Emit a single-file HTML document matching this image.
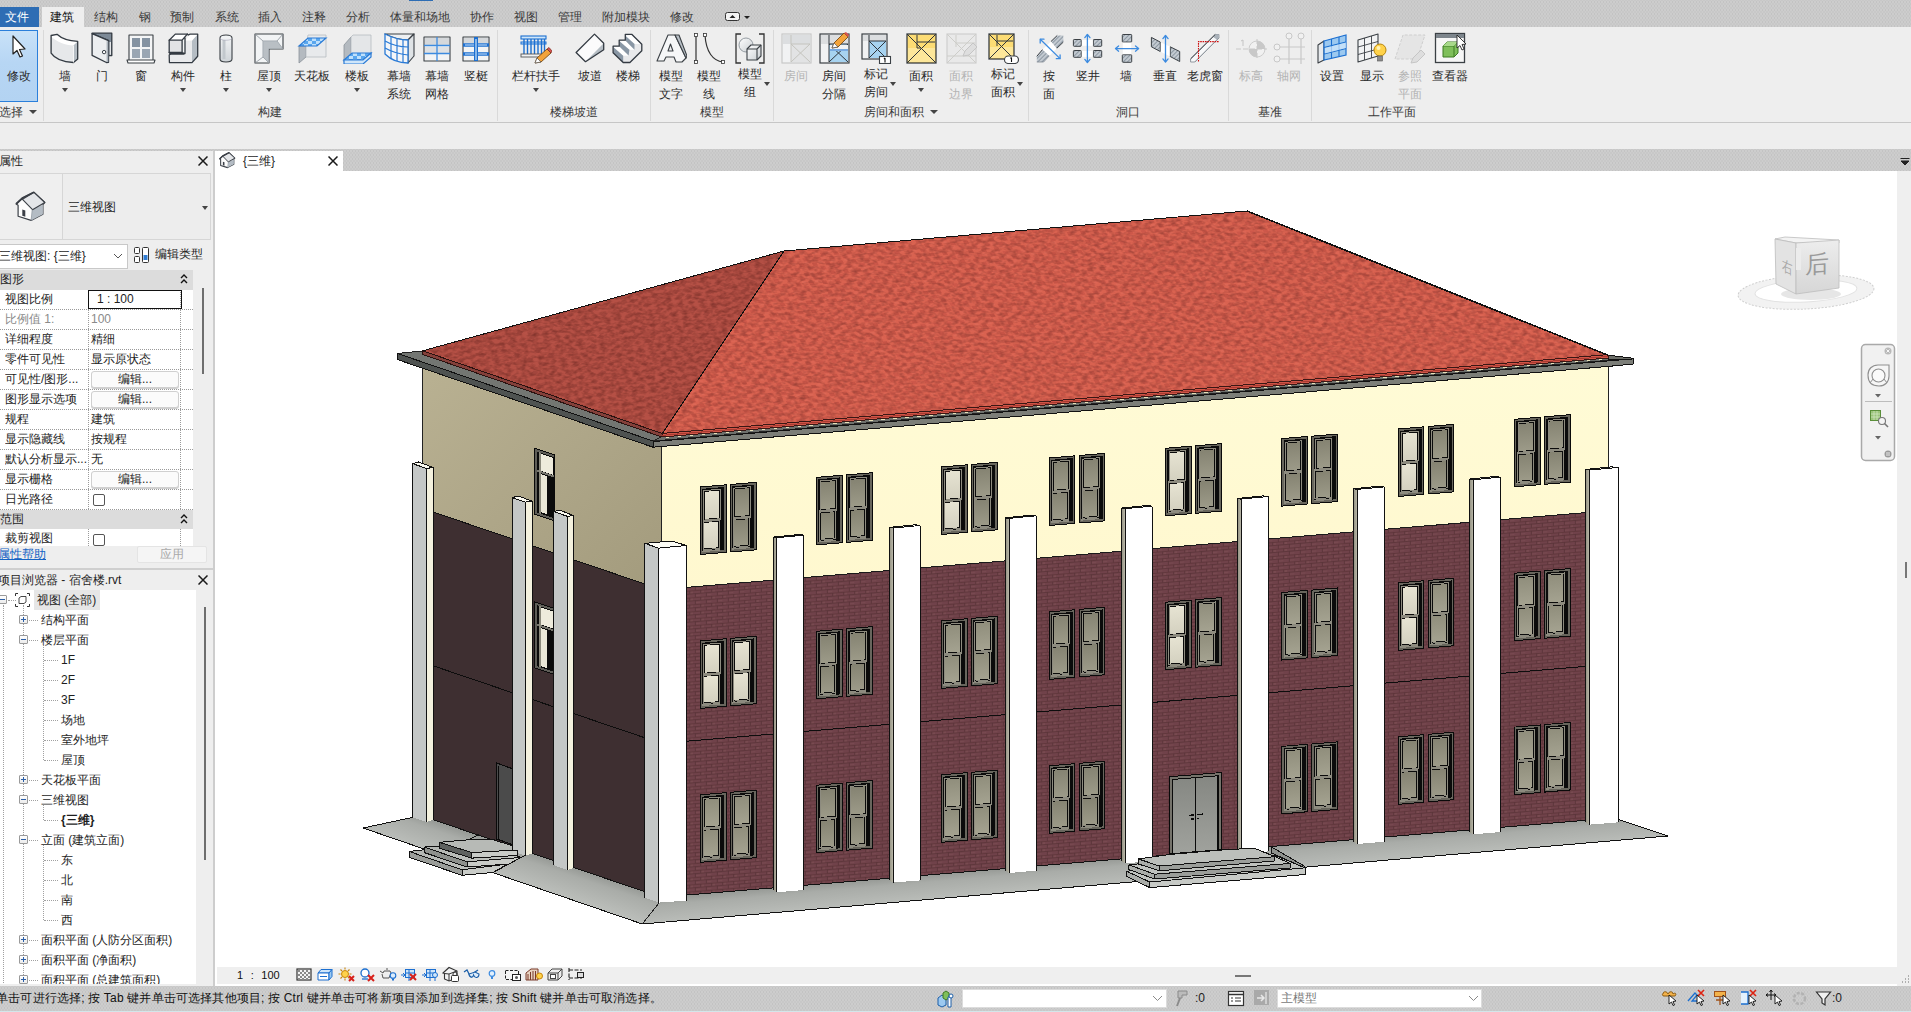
<!DOCTYPE html><html><head><meta charset="utf-8"><title>Revit</title><style>
*{box-sizing:border-box;margin:0;padding:0}
html,body{width:1911px;height:1012px;overflow:hidden;background:#fff;font-family:"Liberation Sans",sans-serif;font-size:12px;color:#1e1e1e}
.abs{position:absolute}
#tabbar{left:0;top:0;width:1911px;height:27px;background-color:#cdcdcd;background-image:radial-gradient(circle,#c3c3c3 0.7px,rgba(195,195,195,0) 0.9px),radial-gradient(circle,#c3c3c3 0.7px,rgba(195,195,195,0) 0.9px);background-size:3px 4px,3px 4px;background-position:0 0,1.5px 2px}
#ribbon{left:0;top:27px;width:1911px;height:96px;background:#eeeeee;border-bottom:1px solid #c6c6c6}
#subrib{left:0;top:123px;width:1911px;height:26px;background:#eeeeee}
#band{left:0;top:149px;width:1911px;height:22px;background-color:#cdcdcd;background-image:radial-gradient(circle,#c3c3c3 0.7px,rgba(195,195,195,0) 0.9px),radial-gradient(circle,#c3c3c3 0.7px,rgba(195,195,195,0) 0.9px);background-size:3px 4px,3px 4px;background-position:0 0,1.5px 2px}
.tab{position:absolute;top:9.4px;height:16px;line-height:16px;font-size:12px;color:#333;white-space:nowrap;transform:translateX(-50%)}
.rl{position:absolute;font-size:12px;line-height:17px;color:#2a2a2a;text-align:center;white-space:nowrap;transform:translateX(-50%)}
.rl.dis{color:#b4b4b4}
.gl{position:absolute;top:104px;font-size:12px;line-height:16px;color:#3a3a3a;white-space:nowrap;transform:translateX(-50%)}
.sep{position:absolute;top:30px;width:1px;height:91px;background:#d9d9d9}
.arr{position:absolute;width:0;height:0;border-left:3px solid transparent;border-right:3px solid transparent;border-top:4px solid #444;transform:translateX(-50%)}
#left{left:0;top:151px;width:213px;height:835px;background:#eeeeee}
#ldiv{left:213px;top:151px;width:2px;height:835px;background:#cdcdcd}
#view{left:215px;top:171px;width:1682px;height:815px;background:#fff}
#vtab{left:215px;top:151px;width:128px;height:20px;background:#fff}
#rscroll{left:1897px;top:171px;width:14px;height:815px;background:#efefef}
#vbar{left:217px;top:967px;width:1694px;height:17px;background:#efefef}
#status{left:0;top:986px;width:1911px;height:26px;background-color:#cdcdcd;background-image:radial-gradient(circle,#c3c3c3 0.7px,rgba(195,195,195,0) 0.9px),radial-gradient(circle,#c3c3c3 0.7px,rgba(195,195,195,0) 0.9px);background-size:3px 4px,3px 4px;background-position:0 0,1.5px 2px;border-bottom:1px solid #d3e6ea}
.prow{position:absolute;left:0;width:193px;height:20px;border-bottom:1px dotted #9a9a9a;background:#fff}
.prow .k{position:absolute;left:5px;top:0;line-height:19px;width:84px;white-space:nowrap;overflow:hidden;font-size:12px}
.prow .v{position:absolute;left:88px;top:0;width:93px;height:19px;border-left:1px dotted #9a9a9a;border-right:1px dotted #9a9a9a;line-height:19px;padding-left:2px;font-size:12px;white-space:nowrap}
.pbtn{position:absolute;left:2px;top:1px;width:88px;height:17px;border:1px solid #d0d0d0;border-radius:3px;background:#fbfbfb;text-align:center;line-height:15px;font-size:12px;box-shadow:0 1px 0 #cfcfcf}
.phead{position:absolute;left:0;width:194px;height:18px;background:#dcdcdc;line-height:17px;font-size:12px}
.tr{position:absolute;height:20px;line-height:20px;font-size:12px;white-space:nowrap;color:#1e1e1e}
.dotl{position:absolute;border-top:1px dotted #a0a0a0;height:0}
.dotv{position:absolute;border-left:1px dotted #a0a0a0;width:0}
.pm{position:absolute;width:9px;height:9px;border:1px solid #9a9a9a;border-radius:1px;background:linear-gradient(#fff,#ececec)}
.pm:before{content:"";position:absolute;left:1px;top:3px;width:5px;height:1px;background:#2b5fa8}
.pm.plus:after{content:"";position:absolute;left:3px;top:1px;width:1px;height:5px;background:#2b5fa8}
.x{position:absolute;width:12px;height:12px}
</style></head><body><div id="tabbar" class="abs"></div><div id="ribbon" class="abs"></div><div id="subrib" class="abs"></div><div id="band" class="abs"></div><div id="left" class="abs"></div><div id="ldiv" class="abs"></div><div id="view" class="abs"></div><div id="vtab" class="abs"></div><div id="rscroll" class="abs"></div><div id="vbar" class="abs"></div><div class="abs" style="left:0;top:7px;width:39px;height:20px;background:#2e6db4"></div><div class="abs" style="left:42px;top:7px;width:42px;height:20px;background:#eeeeee"></div><div class="tab" style="left:17px;color:#fff">文件</div><div class="tab" style="left:62px;color:#111">建筑</div><div class="tab" style="left:106px;color:#3a3a3a">结构</div><div class="tab" style="left:145px;color:#3a3a3a">钢</div><div class="tab" style="left:182px;color:#3a3a3a">预制</div><div class="tab" style="left:227px;color:#3a3a3a">系统</div><div class="tab" style="left:270px;color:#3a3a3a">插入</div><div class="tab" style="left:314px;color:#3a3a3a">注释</div><div class="tab" style="left:358px;color:#3a3a3a">分析</div><div class="tab" style="left:420px;color:#3a3a3a">体量和场地</div><div class="tab" style="left:482px;color:#3a3a3a">协作</div><div class="tab" style="left:526px;color:#3a3a3a">视图</div><div class="tab" style="left:570px;color:#3a3a3a">管理</div><div class="tab" style="left:626px;color:#3a3a3a">附加模块</div><div class="tab" style="left:682px;color:#3a3a3a">修改</div><svg class="abs" style="left:725px;top:12px" width="26" height="10" viewBox="0 0 26 10"><rect x="0.5" y="0.5" width="14" height="8" rx="2" fill="#f4f4f4" stroke="#333"/><path d="M4.5 6L7.5 3L10.5 6Z" fill="#222"/><path d="M19 4L25 4L22 7Z" fill="#222"/></svg><div class="abs" style="left:409px;top:0;width:24px;height:1px;background:#2e6db4"></div><svg width="0" height="0" style="position:absolute"><defs><linearGradient id="gA" x1="0" y1="0" x2="1" y2="1"><stop offset="0" stop-color="#ffffff"/><stop offset="1" stop-color="#c9ced2"/></linearGradient><linearGradient id="gB" x1="0" y1="0" x2="0" y2="1"><stop offset="0" stop-color="#f4f6f7"/><stop offset="1" stop-color="#cfd4d8"/></linearGradient><pattern id="hat" width="3" height="3" patternUnits="userSpaceOnUse" patternTransform="rotate(45)"><rect width="3" height="3" fill="#c3cad1"/><rect width="1" height="3" fill="#8d98a3"/></pattern><pattern id="chk" width="8" height="6" patternUnits="userSpaceOnUse"><rect width="8" height="6" fill="#5aa7ee"/><rect width="4" height="3" fill="#bfe0fb"/><rect x="4" y="3" width="4" height="3" fill="#bfe0fb"/></pattern></defs></svg><div class="abs" style="left:0;top:30px;width:38px;height:72px;background:linear-gradient(#c9e2f8,#b7d6f4 45%,#b3d3f2);border:1px solid #2a7fdb;border-left:none"></div><svg class="abs" style="left:3px;top:32px" width="32" height="32" viewBox="0 0 32 32"><path d="M10 4L10 22L14 18.5L17 25L19.5 24L16.5 17.5L22 17Z" fill="#fff" stroke="#222" stroke-width="1.2" stroke-linejoin="round"/></svg><div class="rl" style="left:19px;top:68px">修改</div><svg class="abs" style="left:49px;top:32px" width="32" height="32" viewBox="0 0 32 32"><path d="M2.1 3.5L8 2.3C13 7 20 9 28.7 9.4L28.7 27L24.5 30.5C15 30 6 27 2.1 21.1Z" fill="#e6e8ea"/><path d="M2.1 3.5L8 2.3C13 7 20 9 28.7 9.4L24.5 13.6C16 13 8 10 2.5 5Z" fill="#ffffff"/><path d="M24.5 13.6L28.7 9.4L28.7 27L24.5 30.5Z" fill="#b5bdc4"/><path d="M2.1 3.5L8 2.3C13 7 20 9 28.7 9.4L28.7 27L24.5 30.5C15 30 6 27 2.1 21.1Z" fill="none" stroke="#333a42" stroke-width="1.3" stroke-linejoin="round" stroke-linecap="round"/><path d="M24.5 13.6L24.5 30.5" fill="none" stroke="#fff" stroke-width=".8"/></svg><div class="rl" style="left:65px;top:68px">墙</div><div class="arr" style="left:65px;top:88px"></div><svg class="abs" style="left:86px;top:32px" width="32" height="32" viewBox="0 0 32 32"><path d="M6.1 1.2L25.8 1.2L25.8 23.6L22.7 23.6L22.7 8.6L6.1 1.7Z" fill="#7d8a97" stroke="#333a42" stroke-width="1.3" stroke-linejoin="round" stroke-linecap="round"/><path d="M23.5 10L25 10L25 22.8L23.5 22.8Z" fill="#e4e6e8"/><path d="M6.1 1.7L22.5 8.6L22.5 30.3L20.4 30.5L6.1 23.4Z" fill="#eceef0" stroke="#333a42" stroke-width="1.3" stroke-linejoin="round" stroke-linecap="round"/><path d="M20.6 9L22.3 9.6L22.3 30L20.6 30Z" fill="#aab3bb"/><circle cx="18.1" cy="20.1" r="1.7" fill="#fff" stroke="#333a42" stroke-width="1"/></svg><div class="rl" style="left:102px;top:68px">门</div><svg class="abs" style="left:125px;top:32px" width="32" height="32" viewBox="0 0 32 32"><rect x="4" y="3" width="24" height="26" fill="#f4f5f6" stroke="#3b4045" stroke-width="1.1" stroke-linejoin="round"/><rect x="7" y="6" width="8" height="9" fill="#8593a2"/><rect x="17" y="6" width="8" height="9" fill="#8593a2"/><rect x="7" y="17" width="8" height="9" fill="#9aa6b3"/><rect x="17" y="17" width="8" height="9" fill="#9aa6b3"/><path d="M2 28L30 28L29 31L3 31Z" fill="#fff" stroke="#3b4045" stroke-width="1.1" stroke-linejoin="round"/></svg><div class="rl" style="left:141px;top:68px">窗</div><svg class="abs" style="left:167px;top:32px" width="32" height="32" viewBox="0 0 32 32"><path d="M2.2 23L18 23L18 8.5L25 8.5L25 30.6L2.4 30.6Z" fill="#e9eaec"/><path d="M25 8.5L30.7 2.5L30.7 24.3L25 30.6Z" fill="#b5bdc4"/><path d="M18 8.5L23.5 2.1L30.7 2.1L25 8.5Z" fill="#fff"/><path d="M2.2 8.2L15.1 8.2L15.1 20.5L2.2 20.5Z" fill="#e2e3e5"/><path d="M2.2 8.2L8.3 2.1L20.3 2.1L15.1 8.2Z" fill="#fff"/><path d="M15.1 8.2L18 5L18 21.5L15.1 20.5Z" fill="#f4f5f6"/><path d="M2.2 8.2L8.3 2.1L20.3 2.1L21.3 3L23.1 2.1L30.7 2.1L30.7 24.3L25 30.6L2.4 30.6L2.2 23L3.5 22L2.2 20.5Z" fill="none" stroke="#333a42" stroke-width="1.3" stroke-linejoin="round" stroke-linecap="round"/><path d="M2.2 8.2L15.1 8.2L15.1 20.5L2.2 20.5M15.1 8.2L20.3 2.1M18 6L18 21.5L15.1 20.5M3.5 22L17 22L18 21.5" fill="none" stroke="#333a42" stroke-width="1.3" stroke-linejoin="round" stroke-linecap="round"/></svg><div class="rl" style="left:183px;top:68px">构件</div><div class="arr" style="left:183px;top:88px"></div><svg class="abs" style="left:210px;top:32px" width="32" height="32" viewBox="0 0 32 32"><path d="M10 6C10 2 22 2 22 6L22 27C22 31 10 31 10 27Z" fill="url(#gB)" stroke="#3b4045" stroke-width="1.1" stroke-linejoin="round"/><path d="M14 8L14 27" stroke="#c2c8cd" stroke-width="3"/><path d="M10 6C10 9 22 9 22 6" fill="none" stroke="#aab" stroke-width=".6"/></svg><div class="rl" style="left:226px;top:68px">柱</div><div class="arr" style="left:226px;top:88px"></div><svg class="abs" style="left:253px;top:32px" width="32" height="32" viewBox="0 0 32 32"><path d="M2 2L30 2L30 17L16 17L16 31L2 31Z" fill="#f2f4f5" stroke="#3b4045" stroke-width="1.1" stroke-linejoin="round"/><path d="M2 2L10 9L24 9L30 2M24 9L30 17M10 9L10 25L2 31M10 25L16 31" fill="none" stroke="#8a9299" stroke-width=".8"/><path d="M10 9L24 9L30 17L16 17L16 31L10 25Z" fill="#aab1b8" opacity=".8"/></svg><div class="rl" style="left:269px;top:68px">屋顶</div><div class="arr" style="left:269px;top:88px"></div><svg class="abs" style="left:296px;top:32px" width="32" height="32" viewBox="0 0 32 32"><path d="M3 14L3 31L10 25L10 14Z" fill="#b4bac0" stroke="#8a9299" stroke-width=".8"/><path d="M10 14L10 25L30 25L30 3L12 3Z" fill="#e8eaec" stroke="#b5bbc0" stroke-width=".8"/><path d="M3 14L12 6L30 6L21 14Z" fill="url(#chk)" stroke="#2b7bd6" stroke-width="1.2"/></svg><div class="rl" style="left:312px;top:68px">天花板</div><svg class="abs" style="left:341px;top:32px" width="32" height="32" viewBox="0 0 32 32"><path d="M3 13L3 30L10 24L10 5Z" fill="#b4bac0" stroke="#8a9299" stroke-width=".8"/><path d="M10 5L10 23L30 23L30 3L12 3Z" fill="#e4e6e8" stroke="#b5bbc0" stroke-width=".8"/><path d="M3 28L11 21L30 21L22 28Z" fill="url(#chk)" stroke="#2b7bd6" stroke-width="1.2"/><path d="M3 28L3 32L22 32L30 25L30 21L22 28Z" fill="#cfe6fa" stroke="#2b7bd6" stroke-width="1.2"/></svg><div class="rl" style="left:357px;top:68px">楼板</div><div class="arr" style="left:357px;top:88px"></div><svg class="abs" style="left:383px;top:32px" width="32" height="32" viewBox="0 0 32 32"><path d="M2 2C10 6 16 8 25 8L31 2Z" fill="#eef0f2" stroke="#3b4045" stroke-width="1.1" stroke-linejoin="round"/><path d="M25 8L31 2L31 24L25 31Z" fill="#dfe3e6" stroke="#3b4045" stroke-width="1.1" stroke-linejoin="round"/><path d="M2 2C10 6 16 8 25 8L25 31C16 31 8 28 2 22Z" fill="#f4f6f8" stroke="#2b7bd6" stroke-width="1.3"/><path d="M2 9C9 13 16 15 25 15M2 16C9 20 16 22 25 23M8 5L8 27M14 7L14 29M20 8L20 31" fill="none" stroke="#2b7bd6" stroke-width="1.2"/></svg><div class="rl" style="left:399px;top:68px">幕墙</div><div class="rl" style="left:399px;top:85.5px">系统</div><svg class="abs" style="left:421px;top:32px" width="32" height="32" viewBox="0 0 32 32"><rect x="3" y="5" width="26" height="24" fill="#f3f4f5" stroke="#3b4045" stroke-width="1.1" stroke-linejoin="round"/><rect x="4" y="6" width="24" height="7" fill="#d5d8db"/><rect x="4" y="15" width="24" height="6" fill="#e0e2e4"/><path d="M3 13.5L29 13.5M3 21.5L29 21.5M16 5L16 29" stroke="#3c8be0" stroke-width="1.3" fill="none"/></svg><div class="rl" style="left:437px;top:68px">幕墙</div><div class="rl" style="left:437px;top:85.5px">网格</div><svg class="abs" style="left:460px;top:32px" width="32" height="32" viewBox="0 0 32 32"><rect x="3" y="5" width="26" height="24" fill="#f3f4f5" stroke="#3b4045" stroke-width="1.1" stroke-linejoin="round"/><rect x="4" y="6" width="24" height="5" fill="#d5d8db"/><path d="M3 13L29 13M3 22L29 22" stroke="#1c6fd0" stroke-width="3.6" fill="none"/><path d="M5 13L27 13M5 22L27 22" stroke="#cfe6fa" stroke-width="1.2" fill="none"/><path d="M16 5L16 29" stroke="#1c6fd0" stroke-width="4" fill="none"/><path d="M16 7L16 28" stroke="#cfe6fa" stroke-width="1.2" fill="none"/></svg><div class="rl" style="left:476px;top:68px">竖梃</div><svg class="abs" style="left:520px;top:32px" width="32" height="32" viewBox="0 0 32 32"><rect x="1" y="4" width="25" height="3" fill="#cfe6fa" stroke="#1c6fd0" stroke-width="1.1"/><rect x="1" y="10" width="25" height="2" fill="#cfe6fa" stroke="#1c6fd0" stroke-width="1"/><path d="M4 7L4 22M7.5 7L7.5 22M11 7L11 22M14.5 7L14.5 22M18 7L18 22M21.5 7L21.5 22M24.5 7L24.5 20" stroke="#1c6fd0" stroke-width="1.4"/><rect x="1" y="22" width="22" height="3" fill="#f2f3f4" stroke="#555" stroke-width=".9"/><path d="M15 31L17 26L27 17L31 21L21 30Z" fill="#f3a33a" stroke="#7a4a10" stroke-width=".9"/><path d="M27 17L29 15.5L32 19L31 21Z" fill="#d9534f" stroke="#7a2a20" stroke-width=".7"/><path d="M15 31L17 26L21 30Z" fill="#fff" stroke="#555" stroke-width=".7"/></svg><div class="rl" style="left:536px;top:68px">栏杆扶手</div><div class="arr" style="left:536px;top:88px"></div><svg class="abs" style="left:574px;top:32px" width="32" height="32" viewBox="0 0 32 32"><path d="M2.1 20.5L20.5 2.1L29.7 11.3L11.5 29.7Z" fill="#fbfbfc"/><path d="M11.5 29.7L29.7 11.3L29.7 17.8Z" fill="#b5bdc4"/><path d="M2.1 20.5L20.5 2.1L29.7 11.3L29.7 17.8L11.5 29.7Z" fill="none" stroke="#333a42" stroke-width="1.3" stroke-linejoin="round" stroke-linecap="round"/></svg><div class="rl" style="left:590px;top:68px">坡道</div><svg class="abs" style="left:612px;top:32px" width="32" height="32" viewBox="0 0 32 32"><path d="M11.2 30.5L11.2 23.8L16.6 23.6L17.4 17.8L22.5 17.8L22.5 12.1L28.7 11.9L29.8 12.3L29.8 18.8L17.9 30.5Z" fill="#e8e9eb"/><path d="M13.7 4L19.5 2.7L28.7 11.9L22.5 12.1Z" fill="#fff"/><path d="M7.8 9.4L13.3 8.6L22.5 17.8L17.4 17.8Z" fill="#fff"/><path d="M1.5 15.3L7.4 14.4L16.6 23.6L11.2 23.8Z" fill="#fff"/><path d="M13.3 8.6L13.7 4L22.5 12.1L22.5 17.8Z" fill="#8997a5"/><path d="M7.4 14.4L7.8 9.4L17.4 17.8L16.6 23.6Z" fill="#8997a5"/><path d="M1.1 20.7L1.5 15.3L11.2 23.8L11.2 30.5Z" fill="#8997a5"/><path d="M1.1 14.2L7.2 14.2L7.2 8.1L13.3 8.1L13.3 2.3L19.7 2.3L29.8 12.3L29.8 18.8L17.9 30.5L11.2 30.5L1.1 20.7Z" fill="none" stroke="#333a42" stroke-width="1.3" stroke-linejoin="round" stroke-linecap="round"/></svg><div class="rl" style="left:628px;top:68px">楼梯</div><svg class="abs" style="left:655px;top:32px" width="32" height="32" viewBox="0 0 32 32"><path d="M2 29L13 3L20 3L31 26L27 30L21 30L19 25L11 25L9 29Z" fill="#f6f7f8" stroke="#3b4045" stroke-width="1.1" stroke-linejoin="round"/><path d="M20 3L24 3L32 24L31 26Z" fill="#b8bfc6" stroke="#3b4045" stroke-width="1.1" stroke-linejoin="round"/><path d="M13 19L18 19L15.5 12Z" fill="#e8eaec" stroke="#3b4045" stroke-width="1.1" stroke-linejoin="round"/></svg><div class="rl" style="left:671px;top:68px">模型</div><div class="rl" style="left:671px;top:85.5px">文字</div><svg class="abs" style="left:693px;top:32px" width="32" height="32" viewBox="0 0 32 32"><path d="M3 3L3 30" stroke="#333" stroke-width="1.2"/><path d="M12 3C13 20 20 29 30 30" stroke="#333" stroke-width="1.2" fill="none"/><rect x="1.5" y="1.5" width="3" height="3" fill="#fff" stroke="#333" stroke-width=".8"/><rect x="1.5" y="28.5" width="3" height="3" fill="#fff" stroke="#333" stroke-width=".8"/><rect x="10.5" y="1.5" width="3" height="3" fill="#fff" stroke="#333" stroke-width=".8"/><rect x="28.5" y="28.5" width="3" height="3" fill="#fff" stroke="#333" stroke-width=".8"/></svg><div class="rl" style="left:709px;top:68px">模型</div><div class="rl" style="left:709px;top:85.5px">线</div><svg class="abs" style="left:734px;top:32px" width="32" height="32" viewBox="0 0 32 32"><path d="M7 2L2 2L2 31L7 31M25 2L30 2L30 31L25 31" fill="none" stroke="#333" stroke-width="1.3"/><circle cx="12" cy="13" r="7" fill="url(#gA)" stroke="#8a9299" stroke-width=".9"/><path d="M13 17L17 13L27 13L27 24L23 28L13 28Z" fill="url(#gA)" stroke="#3b4045" stroke-width="1.1" stroke-linejoin="round"/><path d="M13 17L23 17L23 28M23 17L27 13" fill="none" stroke="#3b4045" stroke-width="1.1" stroke-linejoin="round"/></svg><div class="rl" style="left:750px;top:66px">模型</div><div class="rl" style="left:750px;top:83.5px">组</div><div class="arr" style="left:767px;top:82px"></div><svg class="abs" style="left:780px;top:32px" width="32" height="32" viewBox="0 0 32 32"><rect x="2" y="2" width="29" height="29" fill="#f1f2f3" stroke="#c9c9c9" stroke-width="1.2"/><rect x="3" y="3" width="27" height="9" fill="#dcdee0"/><rect x="11" y="12" width="19" height="18" fill="#e2e3e4"/><path d="M11 3L11 30M11 12L30 12M11 12L30 30M30 12L11 30" stroke="#c4c4be" stroke-width="1" fill="none"/></svg><div class="rl dis" style="left:796px;top:68px">房间</div><svg class="abs" style="left:818px;top:32px" width="32" height="32" viewBox="0 0 32 32"><rect x="2" y="2" width="29" height="29" fill="#f1f2f3" stroke="#3b4045" stroke-width="1.2"/><rect x="3" y="3" width="27" height="9" fill="#dcdee0"/><rect x="11" y="12" width="19" height="18" fill="#a7d3f0"/><path d="M11 3L11 30M11 12L30 12M11 12L30 30M30 12L11 30" stroke="#30363c" stroke-width="1" fill="none"/><rect x="12" y="13" width="18" height="6" fill="#f1f2f3"/><path d="M12 18L30 18" stroke="#2b7bd6" stroke-width="1.2"/><path d="M14 16L16 11L26 1L30 5L20 15Z" fill="#f3a33a" stroke="#7a4a10" stroke-width=".9"/><path d="M26 1L28 0L31 3L30 5Z" fill="#d9534f"/><path d="M14 16L16 11L20 15Z" fill="#fff" stroke="#555" stroke-width=".7"/></svg><div class="rl" style="left:834px;top:68px">房间</div><div class="rl" style="left:834px;top:85.5px">分隔</div><svg class="abs" style="left:860px;top:32px" width="32" height="32" viewBox="0 0 32 32"><rect x="2" y="2" width="25" height="25" fill="#f1f2f3" stroke="#3b4045" stroke-width="1.2"/><rect x="3" y="3" width="23" height="6" fill="#dcdee0"/><rect x="9" y="9" width="17" height="17" fill="#a7d3f0"/><path d="M9 3L9 26M9 9L26 9M9 9L26 26M26 9L9 26" stroke="#30363c" stroke-width="1" fill="none"/><rect x="19.5" y="24.5" width="11" height="7" fill="#fff" stroke="#3b4045" stroke-width="1.1"/><path d="M25 26L25 30.5M24 27L25 26" stroke="#111" stroke-width="1.1" fill="none"/></svg><div class="rl" style="left:876px;top:66px">标记</div><div class="rl" style="left:876px;top:83.5px">房间</div><div class="arr" style="left:893px;top:82px"></div><svg class="abs" style="left:905px;top:32px" width="32" height="32" viewBox="0 0 32 32"><rect x="2" y="2" width="29" height="29" fill="#fcdc74" stroke="#3b4045" stroke-width="1.3"/><rect x="3" y="16" width="27" height="14" fill="#fde79a"/><path d="M2 2L31 31M31 2L2 31M12 3L12 16M12 10L30 10M12 16L16 16" stroke="#30363c" stroke-width="1" fill="none"/></svg><div class="rl" style="left:921px;top:68px">面积</div><div class="arr" style="left:921px;top:88px"></div><svg class="abs" style="left:945px;top:32px" width="32" height="32" viewBox="0 0 32 32"><rect x="2" y="2" width="29" height="29" fill="#e9e9e9" stroke="#cfcfcf" stroke-width="1.2"/><path d="M2 2L31 31M31 2L2 31M11 3L11 15M11 11L30 11M2 24L31 24" stroke="#cdcdc9" stroke-width="1" fill="none"/><path d="M18 24L20 19L28 11L32 15L24 23Z" fill="#dedede" stroke="#c2c2c2" stroke-width=".9"/></svg><div class="rl dis" style="left:961px;top:68px">面积</div><div class="rl dis" style="left:961px;top:85.5px">边界</div><svg class="abs" style="left:987px;top:32px" width="32" height="32" viewBox="0 0 32 32"><rect x="2" y="2" width="25" height="25" fill="#fcdc74" stroke="#3b4045" stroke-width="1.3"/><rect x="3" y="15" width="23" height="11" fill="#fde79a"/><path d="M2 2L27 27M27 2L2 27M10 3L10 14M10 9L26 9" stroke="#30363c" stroke-width="1" fill="none"/><rect x="17.5" y="24" width="14" height="7.5" rx="3.7" fill="#fff" stroke="#3b4045" stroke-width="1.1"/><path d="M24.5 25.5L24.5 30M23.5 26.5L24.5 25.5" stroke="#111" stroke-width="1.1" fill="none"/></svg><div class="rl" style="left:1003px;top:66px">标记</div><div class="rl" style="left:1003px;top:83.5px">面积</div><div class="arr" style="left:1020px;top:82px"></div><svg class="abs" style="left:1033px;top:32px" width="32" height="32" viewBox="0 0 32 32"><path d="M3.8 24.3L9.6 17.5L16.4 23.7L10.6 30L3.8 30Z" fill="url(#hat)"/><path d="M3.8 24.3L9.6 17.5" stroke="#3b4045" stroke-width="1" fill="none"/><path d="M3.8 30L10.6 30L16.4 23.7" stroke="#7d8791" stroke-width=".8" fill="none"/><path d="M17.9 9.6L24.2 3.5L30.3 3.5L30.3 10.1L23.7 16.4Z" fill="url(#hat)"/><path d="M17.9 9.6L24.2 3.5" stroke="#3b4045" stroke-width="1" fill="none"/><path d="M30.3 10.1L23.7 16.4" stroke="#3b4045" stroke-width="1" fill="none"/><path d="M9.6 17.5L17.9 9.6L23.7 16.4L16.4 23.7Z" fill="#fff"/><path d="M7.5 7.5L26.8 26.4" stroke="#3c8be0" stroke-width="1.3" fill="none" stroke-linecap="round" stroke-linejoin="round"/><path d="M7.2 11L7.2 7.2L11 7.2M23.3 26.7L27.1 26.7L27.1 22.9" stroke="#3c8be0" stroke-width="1.3" fill="none" stroke-linecap="round" stroke-linejoin="round"/></svg><div class="rl" style="left:1049px;top:68px">按</div><div class="rl" style="left:1049px;top:85.5px">面</div><svg class="abs" style="left:1072px;top:32px" width="32" height="32" viewBox="0 0 32 32"><rect x="1.4" y="7.5" width="7.9" height="6.8" fill="url(#hat)" stroke="#3b4045" stroke-width="1" rx=".8"/><rect x="21.3" y="7.5" width="8.4" height="6.8" fill="url(#hat)" stroke="#3b4045" stroke-width="1" rx=".8"/><rect x="1.4" y="18.5" width="7.9" height="6.8" fill="url(#hat)" stroke="#3b4045" stroke-width="1" rx=".8"/><rect x="21.3" y="18.5" width="8.4" height="6.8" fill="url(#hat)" stroke="#3b4045" stroke-width="1" rx=".8"/><rect x="9.8" y="8" width="11" height="5.8" fill="#fff"/><rect x="9.8" y="19" width="11" height="5.8" fill="#fff"/><path d="M15.4 2.8L15.4 30" stroke="#3c8be0" stroke-width="1.3" fill="none" stroke-linecap="round" stroke-linejoin="round"/><path d="M12.8 5.6L15.4 2.5L18 5.6M12.8 27.4L15.4 30.5L18 27.4" stroke="#3c8be0" stroke-width="1.3" fill="none" stroke-linecap="round" stroke-linejoin="round"/></svg><div class="rl" style="left:1088px;top:68px">竖井</div><svg class="abs" style="left:1110px;top:32px" width="32" height="32" viewBox="0 0 32 32"><rect x="12.3" y="2.5" width="9.4" height="7.6" fill="url(#hat)" stroke="#3b4045" stroke-width="1" rx=".8"/><rect x="12.3" y="22.7" width="9.4" height="7.6" fill="url(#hat)" stroke="#3b4045" stroke-width="1" rx=".8"/><rect x="12.8" y="10.6" width="8.4" height="11.6" fill="#fff"/><path d="M5.8 16.6L28.3 16.6" stroke="#3c8be0" stroke-width="1.3" fill="none" stroke-linecap="round" stroke-linejoin="round"/><path d="M8.6 14L5.5 16.6L8.6 19.2M25.5 14L28.6 16.6L25.5 19.2" stroke="#3c8be0" stroke-width="1.3" fill="none" stroke-linecap="round" stroke-linejoin="round"/></svg><div class="rl" style="left:1126px;top:68px">墙</div><svg class="abs" style="left:1149px;top:32px" width="32" height="32" viewBox="0 0 32 32"><path d="M2.4 5.4L11.3 10.1L11.3 19.5L2.4 14.8Z" fill="url(#hat)" stroke="#3b4045" stroke-width="1"/><path d="M21.2 14.8L30.7 19.5L30.7 29.5L21.2 24.5Z" fill="url(#hat)" stroke="#3b4045" stroke-width="1"/><path d="M11.8 10.4L20.7 14.6L20.7 24.2L11.8 19.7Z" fill="#fff"/><path d="M16.5 3.8L16.5 29.5" stroke="#3c8be0" stroke-width="1.3" fill="none" stroke-linecap="round" stroke-linejoin="round"/><path d="M13.9 6.6L16.5 3.5L19.1 6.6M13.9 26.9L16.5 30L19.1 26.9" stroke="#3c8be0" stroke-width="1.3" fill="none" stroke-linecap="round" stroke-linejoin="round"/></svg><div class="rl" style="left:1165px;top:68px">垂直</div><svg class="abs" style="left:1189px;top:32px" width="32" height="32" viewBox="0 0 32 32"><path d="M1.6 26.9L26.2 2.5L29.9 2.5L29.9 5.9L5.8 30L1.6 30Z" fill="#f7f8f9" stroke="#7a828a" stroke-width=".8"/><path d="M26.2 2.5L29.9 2.5L29.9 5.9L27.8 7.5L24.1 4.9Z" fill="#aab2ba"/><path d="M1.6 26.9L26.2 2.5" stroke="#3b4045" stroke-width="1"/><path d="M5.8 30L29.9 5.9" stroke="#8a9299" stroke-width=".8"/><path d="M9.5 29.5L9.5 9.6L29.9 9.6" stroke="#cc1010" stroke-width="1.1" stroke-dasharray="1.6 0.8" fill="none"/></svg><div class="rl" style="left:1205px;top:68px">老虎窗</div><svg class="abs" style="left:1235px;top:32px" width="32" height="32" viewBox="0 0 32 32"><circle cx="22" cy="17" r="8" fill="#f1f1f1" stroke="#cdcdcd" stroke-width="1"/><path d="M22 9A8 8 0 0 1 30 17L22 17ZM22 17L22 25A8 8 0 0 1 14 17Z" fill="#c8c8c8"/><path d="M1 17L32 17M22 7L22 27" stroke="#c8c8c8" stroke-width="1" stroke-dasharray="5 2"/><path d="M6 9L8 8L8 14" stroke="#c4c4c4" stroke-width="1" fill="none"/></svg><div class="rl dis" style="left:1251px;top:68px">标高</div><svg class="abs" style="left:1273px;top:32px" width="32" height="32" viewBox="0 0 32 32"><path d="M7 15L32 15M7 27L32 27M16 7L16 32M28 7L28 32" stroke="#c8c8c8" stroke-width="1.2"/><circle cx="16" cy="4" r="3" fill="#f1f1f1" stroke="#c8c8c8"/><circle cx="28" cy="4" r="3" fill="#f1f1f1" stroke="#c8c8c8"/><circle cx="4" cy="15" r="3" fill="#f1f1f1" stroke="#c8c8c8"/><circle cx="4" cy="27" r="3" fill="#f1f1f1" stroke="#c8c8c8"/></svg><div class="rl dis" style="left:1289px;top:68px">轴网</div><svg class="abs" style="left:1316px;top:32px" width="32" height="32" viewBox="0 0 32 32"><path d="M2 13L8 9L8 28L2 31Z" fill="#e6e9ec" stroke="#3b4045" stroke-width="1.1" stroke-linejoin="round"/><path d="M8 9L30 3L30 23L8 28Z" fill="#9cc9f0" stroke="#1c6fd0" stroke-width="1.2"/><path d="M8 15.5L30 10M8 22L30 16.5M15.5 7L15.5 26.5M23 5L23 24.5" stroke="#1c6fd0" stroke-width="1.1" fill="none"/><path d="M9 16L30 10.5L30 16L9 21.5Z" fill="#d6eafb" opacity=".7"/></svg><div class="rl" style="left:1332px;top:68px">设置</div><svg class="abs" style="left:1356px;top:32px" width="32" height="32" viewBox="0 0 32 32"><path d="M2 8L22 2L22 24L2 30Z" fill="#f2f3f4" stroke="#3b4045" stroke-width="1.1" stroke-linejoin="round"/><path d="M2 15L22 9.5M2 22.5L22 17M8.5 6L8.5 28M15.5 4L15.5 26" stroke="#3b4045" stroke-width=".9" fill="none"/><circle cx="24" cy="18" r="6" fill="#ffd24a" stroke="#b8860b" stroke-width="1"/><circle cx="22.5" cy="16" r="2" fill="#fff3b8"/><rect x="21.5" y="24" width="5" height="5" fill="#8c8c8c" stroke="#555" stroke-width=".6"/></svg><div class="rl" style="left:1372px;top:68px">显示</div><svg class="abs" style="left:1394px;top:32px" width="32" height="32" viewBox="0 0 32 32"><path d="M1 27L9 3L31 3L23 27Z" fill="#e5e5e5" stroke="#cfcfcf" stroke-width="1" stroke-dasharray="3 1.5"/><path d="M17 31L19 26L27 18L31 22L23 30Z" fill="#dedede" stroke="#c2c2c2" stroke-width=".9"/></svg><div class="rl dis" style="left:1410px;top:68px">参照</div><div class="rl dis" style="left:1410px;top:85.5px">平面</div><svg class="abs" style="left:1434px;top:32px" width="32" height="32" viewBox="0 0 32 32"><rect x="1.5" y="1.5" width="29" height="29" fill="#f6f6f6" stroke="#3b4045" stroke-width="1.3"/><rect x="2" y="2" width="28" height="4" fill="#7d858c"/><path d="M9 14L13 10L24 10L24 21L20 25L9 25Z" fill="#7fbf5a" stroke="#3d7a22" stroke-width="1"/><path d="M9 14L20 14L20 25M20 14L24 10" stroke="#3d7a22" stroke-width="1" fill="none"/><path d="M9 14L13 10L24 10L20 14Z" fill="#a8d98a"/><path d="M23 3L23 16L26 13.5L28 18L30 17L28 12.5L32 12Z" fill="#fff" stroke="#222" stroke-width=".9" stroke-linejoin="round"/></svg><div class="rl" style="left:1450px;top:68px">查看器</div><div class="sep" style="left:43px"></div><div class="sep" style="left:497px"></div><div class="sep" style="left:650px"></div><div class="sep" style="left:773px"></div><div class="sep" style="left:1028px"></div><div class="sep" style="left:1228px"></div><div class="sep" style="left:1311px"></div><div class="gl" style="left:270px">构建</div><div class="gl" style="left:574px">楼梯坡道</div><div class="gl" style="left:712px">模型</div><div class="gl" style="left:1128px">洞口</div><div class="gl" style="left:1270px">基准</div><div class="gl" style="left:1392px">工作平面</div><div class="gl" style="left:894px">房间和面积</div><div class="arr" style="left:934px;top:110px;border-left-width:4px;border-right-width:4px"></div><div class="gl" style="left:11px">选择</div><div class="arr" style="left:33px;top:110px;border-left-width:4px;border-right-width:4px"></div><div class="abs" style="left:-1px;top:153px;line-height:16px;font-size:12px">属性</div><svg class="abs" style="left:198px;top:156px" width="10" height="10" viewBox="0 0 10 10"><path d="M0.5 0.5L9.5 9.5M9.5 0.5L0.5 9.5" stroke="#1a1a1a" stroke-width="1.5" fill="none"/></svg><div class="abs" style="left:-1px;top:173px;width:212px;height:67px;border:1px solid #d6d6d6;background:#ededed"></div><div class="abs" style="left:-1px;top:173px;width:64px;height:67px;border:1px solid #d6d6d6;background:#efefef"></div><svg class="abs" style="left:15px;top:191px" width="32" height="32" viewBox="0 0 32 32"><path d="M1.1 13L7.5 7L18.9 1.2L29.8 11.5L27.9 13.5L27.9 23.2L16.1 29.4L3.1 25.3L3.1 14.2Z" fill="#fdfdfd" stroke="#3a3f46" stroke-width="1.2" stroke-linejoin="round"/><path d="M17.2 18.7L27.9 13.5L27.9 23.2L16.1 29.4Z" fill="#b4bcc4"/><path d="M7.5 8.3L18.9 1.4L29.8 11.5L17.5 18.7Z" fill="#e4e6e9" stroke="#3a3f46" stroke-width="1.1" stroke-linejoin="round"/><path d="M1.1 13L7.5 7L18.9 1.2" fill="none" stroke="#3a3f46" stroke-width="1.8"/><path d="M7.3 18.4L10.3 19.4L10.3 25.8L7.3 24.8Z" fill="#3c4048"/><path d="M17.2 18.7L16.1 29.4" stroke="#8b949c" stroke-width=".7"/></svg><div class="abs" style="left:68px;top:199px;line-height:16px;font-size:12px">三维视图</div><div class="arr" style="left:205px;top:206px"></div><div class="abs" style="left:-1px;top:244px;width:129px;height:25px;background:#fff;border:1px solid #c8c8c8"></div><div class="abs" style="left:-1px;top:248px;line-height:16px;font-size:12px">三维视图: {三维}</div><svg class="abs" style="left:113px;top:253px" width="10" height="7" viewBox="0 0 10 7"><path d="M1 1L5 5L9 1" fill="none" stroke="#555" stroke-width="1"/></svg><svg class="abs" style="left:133px;top:246px" width="17" height="18" viewBox="0 0 17 18"><rect x="1.5" y="1.5" width="5" height="6" rx="1" fill="#fff" stroke="#333"/><rect x="1.5" y="10.5" width="5" height="6" rx="1" fill="#fff" stroke="#333"/><rect x="9.5" y="1.5" width="6" height="15" rx="1" fill="#fff" stroke="#333"/><rect x="10.5" y="9" width="4" height="5" fill="#2f7bd1"/></svg><div class="abs" style="left:155px;top:246px;line-height:16px;font-size:12px">编辑类型</div><div class="abs" style="left:0;top:270px;width:194px;height:276px;background:#fff"></div><div class="phead" style="top:270px;height:20px;line-height:19px">图形</div><svg class="abs" style="left:180px;top:274px" width="8" height="10" viewBox="0 0 8 10"><path d="M1 4L4 1L7 4M1 9L4 6L7 9" fill="none" stroke="#111" stroke-width="1.4"/></svg><div class="prow" style="top:290px"><div class="k">视图比例</div><div class="v"><div style="position:absolute;left:-1px;top:0px;width:94px;height:19px;border:1.5px solid #111;padding-left:8px;line-height:16px">1 : 100</div></div></div><div class="prow" style="top:310px"><div class="k" style="color:#8a8a8a">比例值 1:</div><div class="v"><span style="color:#8a8a8a">100</span></div></div><div class="prow" style="top:330px"><div class="k">详细程度</div><div class="v">精细</div></div><div class="prow" style="top:350px"><div class="k">零件可见性</div><div class="v">显示原状态</div></div><div class="prow" style="top:370px"><div class="k">可见性/图形...</div><div class="v"><div class="pbtn">编辑...</div></div></div><div class="prow" style="top:390px"><div class="k">图形显示选项</div><div class="v"><div class="pbtn">编辑...</div></div></div><div class="prow" style="top:410px"><div class="k">规程</div><div class="v">建筑</div></div><div class="prow" style="top:430px"><div class="k">显示隐藏线</div><div class="v">按规程</div></div><div class="prow" style="top:450px"><div class="k">默认分析显示...</div><div class="v">无</div></div><div class="prow" style="top:470px"><div class="k">显示栅格</div><div class="v"><div class="pbtn">编辑...</div></div></div><div class="prow" style="top:490px"><div class="k">日光路径</div><div class="v"><div style="position:absolute;left:4px;top:4px;width:12px;height:12px;border:1px solid #555;border-radius:2px;background:#fff"></div></div></div><div class="phead" style="top:510px;height:19px;line-height:19px">范围</div><svg class="abs" style="left:180px;top:514px" width="8" height="10" viewBox="0 0 8 10"><path d="M1 4L4 1L7 4M1 9L4 6L7 9" fill="none" stroke="#111" stroke-width="1.4"/></svg><div class="abs" style="left:0;top:529px;width:193px;height:17px;overflow:hidden"><div class="prow" style="top:0"><div class="k">裁剪视图</div><div class="v"><div style="position:absolute;left:4px;top:5px;width:12px;height:12px;border:1px solid #555;border-radius:2px;background:#fff"></div></div></div></div><div class="abs" style="left:193px;top:270px;width:20px;height:276px;background:#eeeeee"></div><div class="abs" style="left:202px;top:288px;width:2px;height:86px;background:#6e6e6e"></div><div class="abs" style="left:-2px;top:546px;line-height:17px;font-size:12px;color:#1463c4;text-decoration:underline">属性帮助</div><div class="abs" style="left:137px;top:546px;width:70px;height:17px;background:#f5f5f5;border:1px solid #e4e4e4;border-radius:2px;color:#a9a9a9;text-align:center;line-height:15px;font-size:12px">应用</div><div class="abs" style="left:0;top:568px;width:213px;height:1.5px;background:#cfcfcf"></div><div class="abs" style="left:-2px;top:572px;line-height:16px;font-size:12px">项目浏览器 - 宿舍楼.rvt</div><svg class="abs" style="left:198px;top:575px" width="10" height="10" viewBox="0 0 10 10"><path d="M0.5 0.5L9.5 9.5M9.5 0.5L0.5 9.5" stroke="#1a1a1a" stroke-width="1.5" fill="none"/></svg><div class="abs" style="left:0;top:590px;width:196px;height:394px;background:#fff"></div><div class="abs" style="left:204px;top:607px;width:2px;height:253px;background:#6e6e6e"></div><div class="abs" style="left:34px;top:590px;width:66px;height:20px;background:#e6e6e6"></div><div class="dotv" style="left:3px;top:605px;height:382px"></div><div class="dotv" style="left:23px;top:605px;height:382px"></div><div class="dotv" style="left:43px;top:645px;height:115px"></div><div class="dotv" style="left:43px;top:805px;height:15px"></div><div class="dotv" style="left:43px;top:845px;height:75px"></div><div class="pm" style="left:-2px;top:595px"></div><div class="dotl" style="left:8px;top:600px;width:8px"></div><svg class="abs" style="left:15px;top:593px" width="15" height="14" viewBox="0 0 15 14"><path d="M3 0.5L0.5 0.5L0.5 3M12 0.5L14.5 0.5L14.5 3M3 13.5L0.5 13.5L0.5 11M12 13.5L14.5 13.5L14.5 11" fill="none" stroke="#333"/><path d="M4 5L6 3.5L11 3.5L11 9L9 10.5L4 10.5Z" fill="#fff" stroke="#333" stroke-width=".9"/></svg><div class="tr" style="left:37px;top:590px">视图 (全部)</div><div class="pm plus" style="left:19px;top:615px"></div><div class="dotl" style="left:29px;top:620px;width:9px"></div><div class="tr" style="left:41px;top:610px">结构平面</div><div class="pm" style="left:19px;top:635px"></div><div class="dotl" style="left:29px;top:640px;width:9px"></div><div class="tr" style="left:41px;top:630px">楼层平面</div><div class="dotl" style="left:44px;top:660px;width:14px"></div><div class="tr" style="left:61px;top:650px">1F</div><div class="dotl" style="left:44px;top:680px;width:14px"></div><div class="tr" style="left:61px;top:670px">2F</div><div class="dotl" style="left:44px;top:700px;width:14px"></div><div class="tr" style="left:61px;top:690px">3F</div><div class="dotl" style="left:44px;top:720px;width:14px"></div><div class="tr" style="left:61px;top:710px">场地</div><div class="dotl" style="left:44px;top:740px;width:14px"></div><div class="tr" style="left:61px;top:730px">室外地坪</div><div class="dotl" style="left:44px;top:760px;width:14px"></div><div class="tr" style="left:61px;top:750px">屋顶</div><div class="pm plus" style="left:19px;top:775px"></div><div class="dotl" style="left:29px;top:780px;width:9px"></div><div class="tr" style="left:41px;top:770px">天花板平面</div><div class="pm" style="left:19px;top:795px"></div><div class="dotl" style="left:29px;top:800px;width:9px"></div><div class="tr" style="left:41px;top:790px">三维视图</div><div class="dotl" style="left:44px;top:820px;width:14px"></div><div class="tr" style="left:61px;top:810px;font-weight:bold">{三维}</div><div class="pm" style="left:19px;top:835px"></div><div class="dotl" style="left:29px;top:840px;width:9px"></div><div class="tr" style="left:41px;top:830px">立面 (建筑立面)</div><div class="dotl" style="left:44px;top:860px;width:14px"></div><div class="tr" style="left:61px;top:850px">东</div><div class="dotl" style="left:44px;top:880px;width:14px"></div><div class="tr" style="left:61px;top:870px">北</div><div class="dotl" style="left:44px;top:900px;width:14px"></div><div class="tr" style="left:61px;top:890px">南</div><div class="dotl" style="left:44px;top:920px;width:14px"></div><div class="tr" style="left:61px;top:910px">西</div><div class="pm plus" style="left:19px;top:935px"></div><div class="dotl" style="left:29px;top:940px;width:9px"></div><div class="tr" style="left:41px;top:930px">面积平面 (人防分区面积)</div><div class="pm plus" style="left:19px;top:955px"></div><div class="dotl" style="left:29px;top:960px;width:9px"></div><div class="tr" style="left:41px;top:950px">面积平面 (净面积)</div><div class="pm plus" style="left:19px;top:975px"></div><div class="dotl" style="left:29px;top:980px;width:9px"></div><div class="tr" style="left:41px;top:970px">面积平面 (总建筑面积)</div><div class="abs" style="left:0;top:984px;width:213px;height:2px;background:#eeeeee"></div><div id="status" class="abs"></div><svg class="abs" style="left:219px;top:152px" width="17" height="17" viewBox="0 0 32 32"><path d="M1.1 13L7.5 7L18.9 1.2L29.8 11.5L27.9 13.5L27.9 23.2L16.1 29.4L3.1 25.3L3.1 14.2Z" fill="#fdfdfd" stroke="#3a3f46" stroke-width="2" stroke-linejoin="round"/><path d="M17.2 18.7L27.9 13.5L27.9 23.2L16.1 29.4Z" fill="#b4bcc4"/><path d="M7.5 8.3L18.9 1.4L29.8 11.5L17.5 18.7Z" fill="#e4e6e9" stroke="#3a3f46" stroke-width="1.8" stroke-linejoin="round"/><path d="M1.1 13L7.5 7L18.9 1.2" fill="none" stroke="#3a3f46" stroke-width="2.6"/><path d="M7.3 18.4L10.3 19.4L10.3 25.8L7.3 24.8Z" fill="#3c4048"/><path d="M17.2 18.7L16.1 29.4" stroke="#8b949c" stroke-width=".7"/></svg><div class="abs" style="left:243px;top:153px;line-height:16px;font-size:12px">{三维}</div><svg class="abs" style="left:328px;top:156px" width="10" height="10" viewBox="0 0 10 10"><path d="M0.5 0.5L9.5 9.5M9.5 0.5L0.5 9.5" stroke="#1a1a1a" stroke-width="1.5" fill="none"/></svg><svg class="abs" style="left:1900px;top:158px" width="10" height="8" viewBox="0 0 10 8"><path d="M0.5 0.5L9.5 0.5M1 3L9 3L5 7Z" fill="#222" stroke="#222"/></svg><svg class="abs" style="left:216px;top:171px" width="1681" height="794" viewBox="216 171 1681 794" shape-rendering="crispEdges"><defs><linearGradient id="gTan" x1="0" y1="0" x2="1" y2="1"><stop offset="0" stop-color="#b9b192"/><stop offset="0.5" stop-color="#aea688"/><stop offset="1" stop-color="#a39b7d"/></linearGradient><linearGradient id="gCream" x1="0" y1="0" x2="0" y2="1"><stop offset="0" stop-color="#fffbd6"/><stop offset="1" stop-color="#fff8cf"/></linearGradient><linearGradient id="gSlab" gradientUnits="userSpaceOnUse" x1="1000" y1="868" x2="1002.3" y2="895"><stop offset="0" stop-color="#959894"/><stop offset="0.3" stop-color="#a9aca8"/><stop offset="0.7" stop-color="#b3b6b2"/><stop offset="1" stop-color="#bbbeba"/></linearGradient><linearGradient id="gSlabL" gradientUnits="userSpaceOnUse" x1="506" y1="844" x2="496" y2="874"><stop offset="0" stop-color="#959894"/><stop offset="0.3" stop-color="#a9aca8"/><stop offset="0.7" stop-color="#b3b6b2"/><stop offset="1" stop-color="#bbbeba"/></linearGradient><linearGradient id="gStep" x1="0" y1="0" x2="1" y2="1"><stop offset="0" stop-color="#b0b3af"/><stop offset="1" stop-color="#c2c5c1"/></linearGradient><linearGradient id="gGlassD" x1="0" y1="0" x2="0" y2="1"><stop offset="0" stop-color="#858372"/><stop offset="1" stop-color="#9c9a88"/></linearGradient><linearGradient id="gGlassM" x1="0" y1="0" x2="0" y2="1"><stop offset="0" stop-color="#908e7c"/><stop offset="1" stop-color="#a4a290"/></linearGradient><linearGradient id="gGlassL" x1="0" y1="0" x2="0" y2="1"><stop offset="0" stop-color="#e6e3d2"/><stop offset="1" stop-color="#d4d1c0"/></linearGradient><linearGradient id="gDoor" x1="0" y1="0" x2="0" y2="1"><stop offset="0" stop-color="#858782"/><stop offset="1" stop-color="#a0a29d"/></linearGradient><linearGradient id="gColS" x1="0" y1="0" x2="1" y2="0"><stop offset="0" stop-color="#8f8d7e"/><stop offset="1" stop-color="#b9b7a8"/></linearGradient><pattern id="brick" width="11" height="7" patternUnits="userSpaceOnUse" patternTransform="matrix(1 -0.0832 0 1 0 0)"><rect width="11" height="7" fill="#70424a"/><rect y="0" width="11" height="1" fill="#5f373c"/><rect y="3.5" width="11" height="1" fill="#62383d"/><rect x="2" y="0" width="1" height="3.5" fill="#5a3439"/><rect x="7.5" y="3.5" width="1" height="3.5" fill="#5a3439"/><rect x="3" y="1.5" width="4" height="1.5" fill="#784a50"/><rect x="8.5" y="5" width="2.5" height="1.5" fill="#784a50"/></pattern><pattern id="tileF" width="13" height="9" patternUnits="userSpaceOnUse" patternTransform="matrix(1 -0.0832 0.55 1 0 0)"><rect width="13" height="9" fill="#d96250"/><rect x="1" y="1" width="5" height="3" fill="#c04e43" opacity=".75"/><rect x="7" y="5" width="5" height="3" fill="#c55246" opacity=".6"/><rect x="7" y="0" width="4" height="2" fill="#de6a59" opacity=".7"/><rect x="0" y="5" width="4" height="2" fill="#dd6857" opacity=".6"/></pattern><pattern id="tileS" width="13" height="9" patternUnits="userSpaceOnUse" patternTransform="matrix(1 0.34 -0.9 1 0 0)"><rect width="13" height="9" fill="#b55045"/><rect x="1" y="1" width="5" height="3" fill="#9c4239" opacity=".7"/><rect x="7" y="5" width="5" height="3" fill="#a1453b" opacity=".6"/><rect x="7" y="0" width="4" height="2" fill="#b95448" opacity=".6"/></pattern><filter id="mottF" x="0" y="0" width="1" height="1" color-interpolation-filters="sRGB"><feTurbulence type="fractalNoise" baseFrequency="0.17 0.3" numOctaves="2" seed="7" result="n"/><feColorMatrix in="n" type="matrix" values="0 0 0 0 0.62  0 0 0 0 0.26  0 0 0 0 0.22  1.9 0 0 0 -0.72" result="c"/><feComposite in="c" in2="SourceGraphic" operator="in"/></filter><filter id="mottS" x="0" y="0" width="1" height="1" color-interpolation-filters="sRGB"><feTurbulence type="fractalNoise" baseFrequency="0.18 0.3" numOctaves="2" seed="11" result="n"/><feColorMatrix in="n" type="matrix" values="0 0 0 0 0.5  0 0 0 0 0.2  0 0 0 0 0.17  1.7 0 0 0 -0.65" result="c"/><feComposite in="c" in2="SourceGraphic" operator="in"/></filter></defs><polygon points="642.3,924 659,903 661,894.2 1608.5,815.4 1618.6,819.5 1668,836" fill="url(#gSlab)"/><polygon points="363,828 412.4,817.4 422,812.9 661,894.2 659,903 642.3,924" fill="url(#gSlabL)"/><polygon points="363,828 412.4,817.4 422,815.9 661,897.2 1608.5,818.4 1618.6,819.5 1668,836 642.3,924" fill="none" stroke="#111" stroke-width="1" stroke-linejoin="round"/><line x1="642.3" y1="924" x2="659" y2="903" stroke="#222" stroke-width="1"/><polygon points="422,365 661,444 661,589.5 422,508.2" fill="url(#gTan)" stroke="#222" stroke-width="1" stroke-linejoin="round"/><polygon points="422,508.2 661,589.5 661,897.2 422,815.9" fill="#3e2f31" stroke="#111" stroke-width="1" stroke-linejoin="round"/><line x1="422" y1="662" x2="661" y2="743.3" stroke="#0d0d0d" stroke-width="1"/><polygon points="661,444 1608.5,365.2 1608.5,510.7 661,589.5" fill="url(#gCream)" stroke="#222" stroke-width="1" stroke-linejoin="round"/><polygon points="661,589.5 1608.5,510.7 1608.5,818.4 661,897.2" fill="url(#brick)" stroke="#111" stroke-width="1" stroke-linejoin="round"/><line x1="661" y1="589.5" x2="1608.5" y2="510.7" stroke="#1a1a1a" stroke-width="1"/><line x1="661" y1="743.3" x2="1608.5" y2="664.5" stroke="#0d0d0d" stroke-width="1"/><g transform="matrix(1 0.34 0 1 534.4 448)"><rect x="0" y="0" width="20.5" height="66" fill="#5f5e58" stroke="#0a0a0a" stroke-width="1"/><rect x="3" y="2.5" width="16.5" height="61" fill="#0b0b0b"/><rect x="7" y="3.5" width="12" height="17" fill="#eeebdc"/><rect x="7" y="24" width="6" height="38" fill="#e9e6d6"/><rect x="3" y="21" width="16.5" height="2" fill="#77766e"/><rect x="4.5" y="2.5" width="1.6" height="61" fill="#8b897c"/></g><g transform="matrix(1 0.34 0 1 534.4 601.8)"><rect x="0" y="0" width="20.5" height="66" fill="#5f5e58" stroke="#0a0a0a" stroke-width="1"/><rect x="3" y="2.5" width="16.5" height="61" fill="#0b0b0b"/><rect x="7" y="3.5" width="12" height="17" fill="#eeebdc"/><rect x="7" y="24" width="6" height="38" fill="#e9e6d6"/><rect x="3" y="21" width="16.5" height="2" fill="#77766e"/><rect x="4.5" y="2.5" width="1.6" height="61" fill="#8b897c"/></g><polygon points="496.4,763 512.3,768.6 512.3,844.5 496.4,839" fill="#4b4b4b" stroke="#0a0a0a" stroke-width="1.2" stroke-linejoin="round"/><line x1="498.6" y1="766" x2="498.6" y2="839.5" stroke="#0a0a0a" stroke-width="1.5"/><g transform="matrix(1 -0.0832 0 1 700.3 487)"><rect x="0" y="0" width="25.8" height="67.5" fill="#68665d" stroke="#0a0a0a" stroke-width="1"/><rect x="1.9" y="2" width="22" height="63.1" fill="#0b0b0b"/><rect x="3.6" y="3.9" width="16.4" height="29.5" fill="none" stroke="#8d8b7f" stroke-width="1"/><rect x="3" y="35" width="16.2" height="28" fill="none" stroke="#8d8b7f" stroke-width="1"/><rect x="4.8" y="5.2" width="13.8" height="27" fill="url(#gGlassL)"/><rect x="4.2" y="36.2" width="13.6" height="25.6" fill="url(#gGlassL)"/><rect x="2.6" y="33" width="17.8" height="1.8" fill="#8d8b7f"/><rect x="2" y="63.7" width="17.8" height="1.6" fill="#8d8b7f"/></g><g transform="matrix(1 -0.0832 0 1 730.3 484.5)"><rect x="0" y="0" width="25.8" height="67.5" fill="#68665d" stroke="#0a0a0a" stroke-width="1"/><rect x="1.9" y="2" width="22" height="63.1" fill="#0b0b0b"/><rect x="3.6" y="3.9" width="16.4" height="29.5" fill="none" stroke="#8d8b7f" stroke-width="1"/><rect x="3" y="35" width="16.2" height="28" fill="none" stroke="#8d8b7f" stroke-width="1"/><rect x="4.8" y="5.2" width="13.8" height="27" fill="url(#gGlassD)"/><rect x="4.2" y="36.2" width="13.6" height="25.6" fill="url(#gGlassD)"/><rect x="2.6" y="33" width="17.8" height="1.8" fill="#8d8b7f"/><rect x="2" y="63.7" width="17.8" height="1.6" fill="#8d8b7f"/></g><g transform="matrix(1 -0.0832 0 1 816.6 477.4)"><rect x="0" y="0" width="25.8" height="67.5" fill="#68665d" stroke="#0a0a0a" stroke-width="1"/><rect x="1.9" y="2" width="22" height="63.1" fill="#0b0b0b"/><rect x="3.6" y="3.9" width="16.4" height="29.5" fill="none" stroke="#8d8b7f" stroke-width="1"/><rect x="3" y="35" width="16.2" height="28" fill="none" stroke="#8d8b7f" stroke-width="1"/><rect x="4.8" y="5.2" width="13.8" height="27" fill="url(#gGlassD)"/><rect x="4.2" y="36.2" width="13.6" height="25.6" fill="url(#gGlassD)"/><rect x="2.6" y="33" width="17.8" height="1.8" fill="#8d8b7f"/><rect x="2" y="63.7" width="17.8" height="1.6" fill="#8d8b7f"/></g><g transform="matrix(1 -0.0832 0 1 846.6 474.9)"><rect x="0" y="0" width="25.8" height="67.5" fill="#68665d" stroke="#0a0a0a" stroke-width="1"/><rect x="1.9" y="2" width="22" height="63.1" fill="#0b0b0b"/><rect x="3.6" y="3.9" width="16.4" height="29.5" fill="none" stroke="#8d8b7f" stroke-width="1"/><rect x="3" y="35" width="16.2" height="28" fill="none" stroke="#8d8b7f" stroke-width="1"/><rect x="4.8" y="5.2" width="13.8" height="27" fill="url(#gGlassD)"/><rect x="4.2" y="36.2" width="13.6" height="25.6" fill="url(#gGlassD)"/><rect x="2.6" y="33" width="17.8" height="1.8" fill="#8d8b7f"/><rect x="2" y="63.7" width="17.8" height="1.6" fill="#8d8b7f"/></g><g transform="matrix(1 -0.0832 0 1 941.3 467)"><rect x="0" y="0" width="25.8" height="67.5" fill="#68665d" stroke="#0a0a0a" stroke-width="1"/><rect x="1.9" y="2" width="22" height="63.1" fill="#0b0b0b"/><rect x="3.6" y="3.9" width="16.4" height="29.5" fill="none" stroke="#8d8b7f" stroke-width="1"/><rect x="3" y="35" width="16.2" height="28" fill="none" stroke="#8d8b7f" stroke-width="1"/><rect x="4.8" y="5.2" width="13.8" height="27" fill="url(#gGlassL)"/><rect x="4.2" y="36.2" width="13.6" height="25.6" fill="url(#gGlassL)"/><rect x="2.6" y="33" width="17.8" height="1.8" fill="#8d8b7f"/><rect x="2" y="63.7" width="17.8" height="1.6" fill="#8d8b7f"/></g><g transform="matrix(1 -0.0832 0 1 971.3 464.5)"><rect x="0" y="0" width="25.8" height="67.5" fill="#68665d" stroke="#0a0a0a" stroke-width="1"/><rect x="1.9" y="2" width="22" height="63.1" fill="#0b0b0b"/><rect x="3.6" y="3.9" width="16.4" height="29.5" fill="none" stroke="#8d8b7f" stroke-width="1"/><rect x="3" y="35" width="16.2" height="28" fill="none" stroke="#8d8b7f" stroke-width="1"/><rect x="4.8" y="5.2" width="13.8" height="27" fill="url(#gGlassD)"/><rect x="4.2" y="36.2" width="13.6" height="25.6" fill="url(#gGlassD)"/><rect x="2.6" y="33" width="17.8" height="1.8" fill="#8d8b7f"/><rect x="2" y="63.7" width="17.8" height="1.6" fill="#8d8b7f"/></g><g transform="matrix(1 -0.0832 0 1 1049.1 458)"><rect x="0" y="0" width="25.8" height="67.5" fill="#68665d" stroke="#0a0a0a" stroke-width="1"/><rect x="1.9" y="2" width="22" height="63.1" fill="#0b0b0b"/><rect x="3.6" y="3.9" width="16.4" height="29.5" fill="none" stroke="#8d8b7f" stroke-width="1"/><rect x="3" y="35" width="16.2" height="28" fill="none" stroke="#8d8b7f" stroke-width="1"/><rect x="4.8" y="5.2" width="13.8" height="27" fill="url(#gGlassD)"/><rect x="4.2" y="36.2" width="13.6" height="25.6" fill="url(#gGlassD)"/><rect x="2.6" y="33" width="17.8" height="1.8" fill="#8d8b7f"/><rect x="2" y="63.7" width="17.8" height="1.6" fill="#8d8b7f"/></g><g transform="matrix(1 -0.0832 0 1 1079.1 455.5)"><rect x="0" y="0" width="25.8" height="67.5" fill="#68665d" stroke="#0a0a0a" stroke-width="1"/><rect x="1.9" y="2" width="22" height="63.1" fill="#0b0b0b"/><rect x="3.6" y="3.9" width="16.4" height="29.5" fill="none" stroke="#8d8b7f" stroke-width="1"/><rect x="3" y="35" width="16.2" height="28" fill="none" stroke="#8d8b7f" stroke-width="1"/><rect x="4.8" y="5.2" width="13.8" height="27" fill="url(#gGlassD)"/><rect x="4.2" y="36.2" width="13.6" height="25.6" fill="url(#gGlassD)"/><rect x="2.6" y="33" width="17.8" height="1.8" fill="#8d8b7f"/><rect x="2" y="63.7" width="17.8" height="1.6" fill="#8d8b7f"/></g><g transform="matrix(1 -0.0832 0 1 1165.5 448.3)"><rect x="0" y="0" width="25.8" height="67.5" fill="#68665d" stroke="#0a0a0a" stroke-width="1"/><rect x="1.9" y="2" width="22" height="63.1" fill="#0b0b0b"/><rect x="3.6" y="3.9" width="16.4" height="29.5" fill="none" stroke="#8d8b7f" stroke-width="1"/><rect x="3" y="35" width="16.2" height="28" fill="none" stroke="#8d8b7f" stroke-width="1"/><rect x="4.8" y="5.2" width="13.8" height="27" fill="url(#gGlassL)"/><rect x="4.2" y="36.2" width="13.6" height="25.6" fill="url(#gGlassL)"/><rect x="2.6" y="33" width="17.8" height="1.8" fill="#8d8b7f"/><rect x="2" y="63.7" width="17.8" height="1.6" fill="#8d8b7f"/></g><g transform="matrix(1 -0.0832 0 1 1195.5 445.8)"><rect x="0" y="0" width="25.8" height="67.5" fill="#68665d" stroke="#0a0a0a" stroke-width="1"/><rect x="1.9" y="2" width="22" height="63.1" fill="#0b0b0b"/><rect x="3.6" y="3.9" width="16.4" height="29.5" fill="none" stroke="#8d8b7f" stroke-width="1"/><rect x="3" y="35" width="16.2" height="28" fill="none" stroke="#8d8b7f" stroke-width="1"/><rect x="4.8" y="5.2" width="13.8" height="27" fill="url(#gGlassD)"/><rect x="4.2" y="36.2" width="13.6" height="25.6" fill="url(#gGlassD)"/><rect x="2.6" y="33" width="17.8" height="1.8" fill="#8d8b7f"/><rect x="2" y="63.7" width="17.8" height="1.6" fill="#8d8b7f"/></g><g transform="matrix(1 -0.0832 0 1 1281.8 438.6)"><rect x="0" y="0" width="25.8" height="67.5" fill="#68665d" stroke="#0a0a0a" stroke-width="1"/><rect x="1.9" y="2" width="22" height="63.1" fill="#0b0b0b"/><rect x="3.6" y="3.9" width="16.4" height="29.5" fill="none" stroke="#8d8b7f" stroke-width="1"/><rect x="3" y="35" width="16.2" height="28" fill="none" stroke="#8d8b7f" stroke-width="1"/><rect x="4.8" y="5.2" width="13.8" height="27" fill="url(#gGlassD)"/><rect x="4.2" y="36.2" width="13.6" height="25.6" fill="url(#gGlassD)"/><rect x="2.6" y="33" width="17.8" height="1.8" fill="#8d8b7f"/><rect x="2" y="63.7" width="17.8" height="1.6" fill="#8d8b7f"/></g><g transform="matrix(1 -0.0832 0 1 1311.8 436.2)"><rect x="0" y="0" width="25.8" height="67.5" fill="#68665d" stroke="#0a0a0a" stroke-width="1"/><rect x="1.9" y="2" width="22" height="63.1" fill="#0b0b0b"/><rect x="3.6" y="3.9" width="16.4" height="29.5" fill="none" stroke="#8d8b7f" stroke-width="1"/><rect x="3" y="35" width="16.2" height="28" fill="none" stroke="#8d8b7f" stroke-width="1"/><rect x="4.8" y="5.2" width="13.8" height="27" fill="url(#gGlassD)"/><rect x="4.2" y="36.2" width="13.6" height="25.6" fill="url(#gGlassD)"/><rect x="2.6" y="33" width="17.8" height="1.8" fill="#8d8b7f"/><rect x="2" y="63.7" width="17.8" height="1.6" fill="#8d8b7f"/></g><g transform="matrix(1 -0.0832 0 1 1398.1 429)"><rect x="0" y="0" width="25.8" height="67.5" fill="#68665d" stroke="#0a0a0a" stroke-width="1"/><rect x="1.9" y="2" width="22" height="63.1" fill="#0b0b0b"/><rect x="3.6" y="3.9" width="16.4" height="29.5" fill="none" stroke="#8d8b7f" stroke-width="1"/><rect x="3" y="35" width="16.2" height="28" fill="none" stroke="#8d8b7f" stroke-width="1"/><rect x="4.8" y="5.2" width="13.8" height="27" fill="url(#gGlassL)"/><rect x="4.2" y="36.2" width="13.6" height="25.6" fill="url(#gGlassL)"/><rect x="2.6" y="33" width="17.8" height="1.8" fill="#8d8b7f"/><rect x="2" y="63.7" width="17.8" height="1.6" fill="#8d8b7f"/></g><g transform="matrix(1 -0.0832 0 1 1428.1 426.5)"><rect x="0" y="0" width="25.8" height="67.5" fill="#68665d" stroke="#0a0a0a" stroke-width="1"/><rect x="1.9" y="2" width="22" height="63.1" fill="#0b0b0b"/><rect x="3.6" y="3.9" width="16.4" height="29.5" fill="none" stroke="#8d8b7f" stroke-width="1"/><rect x="3" y="35" width="16.2" height="28" fill="none" stroke="#8d8b7f" stroke-width="1"/><rect x="4.8" y="5.2" width="13.8" height="27" fill="url(#gGlassD)"/><rect x="4.2" y="36.2" width="13.6" height="25.6" fill="url(#gGlassD)"/><rect x="2.6" y="33" width="17.8" height="1.8" fill="#8d8b7f"/><rect x="2" y="63.7" width="17.8" height="1.6" fill="#8d8b7f"/></g><g transform="matrix(1 -0.0832 0 1 1514.4 419.3)"><rect x="0" y="0" width="25.8" height="67.5" fill="#68665d" stroke="#0a0a0a" stroke-width="1"/><rect x="1.9" y="2" width="22" height="63.1" fill="#0b0b0b"/><rect x="3.6" y="3.9" width="16.4" height="29.5" fill="none" stroke="#8d8b7f" stroke-width="1"/><rect x="3" y="35" width="16.2" height="28" fill="none" stroke="#8d8b7f" stroke-width="1"/><rect x="4.8" y="5.2" width="13.8" height="27" fill="url(#gGlassD)"/><rect x="4.2" y="36.2" width="13.6" height="25.6" fill="url(#gGlassD)"/><rect x="2.6" y="33" width="17.8" height="1.8" fill="#8d8b7f"/><rect x="2" y="63.7" width="17.8" height="1.6" fill="#8d8b7f"/></g><g transform="matrix(1 -0.0832 0 1 1544.4 416.8)"><rect x="0" y="0" width="25.8" height="67.5" fill="#68665d" stroke="#0a0a0a" stroke-width="1"/><rect x="1.9" y="2" width="22" height="63.1" fill="#0b0b0b"/><rect x="3.6" y="3.9" width="16.4" height="29.5" fill="none" stroke="#8d8b7f" stroke-width="1"/><rect x="3" y="35" width="16.2" height="28" fill="none" stroke="#8d8b7f" stroke-width="1"/><rect x="4.8" y="5.2" width="13.8" height="27" fill="url(#gGlassD)"/><rect x="4.2" y="36.2" width="13.6" height="25.6" fill="url(#gGlassD)"/><rect x="2.6" y="33" width="17.8" height="1.8" fill="#8d8b7f"/><rect x="2" y="63.7" width="17.8" height="1.6" fill="#8d8b7f"/></g><g transform="matrix(1 -0.0832 0 1 700.3 640.9)"><rect x="0" y="0" width="25.8" height="67.5" fill="#68665d" stroke="#0a0a0a" stroke-width="1"/><rect x="1.9" y="2" width="22" height="63.1" fill="#0b0b0b"/><rect x="3.6" y="3.9" width="16.4" height="29.5" fill="none" stroke="#8d8b7f" stroke-width="1"/><rect x="3" y="35" width="16.2" height="28" fill="none" stroke="#8d8b7f" stroke-width="1"/><rect x="4.8" y="5.2" width="13.8" height="27" fill="url(#gGlassL)"/><rect x="4.2" y="36.2" width="13.6" height="25.6" fill="url(#gGlassL)"/><rect x="2.6" y="33" width="17.8" height="1.8" fill="#8d8b7f"/><rect x="2" y="63.7" width="17.8" height="1.6" fill="#8d8b7f"/></g><g transform="matrix(1 -0.0832 0 1 730.3 638.4)"><rect x="0" y="0" width="25.8" height="67.5" fill="#68665d" stroke="#0a0a0a" stroke-width="1"/><rect x="1.9" y="2" width="22" height="63.1" fill="#0b0b0b"/><rect x="3.6" y="3.9" width="16.4" height="29.5" fill="none" stroke="#8d8b7f" stroke-width="1"/><rect x="3" y="35" width="16.2" height="28" fill="none" stroke="#8d8b7f" stroke-width="1"/><rect x="4.8" y="5.2" width="13.8" height="27" fill="url(#gGlassL)"/><rect x="4.2" y="36.2" width="13.6" height="25.6" fill="url(#gGlassL)"/><rect x="2.6" y="33" width="17.8" height="1.8" fill="#8d8b7f"/><rect x="2" y="63.7" width="17.8" height="1.6" fill="#8d8b7f"/></g><g transform="matrix(1 -0.0832 0 1 816.6 631.3)"><rect x="0" y="0" width="25.8" height="67.5" fill="#68665d" stroke="#0a0a0a" stroke-width="1"/><rect x="1.9" y="2" width="22" height="63.1" fill="#0b0b0b"/><rect x="3.6" y="3.9" width="16.4" height="29.5" fill="none" stroke="#8d8b7f" stroke-width="1"/><rect x="3" y="35" width="16.2" height="28" fill="none" stroke="#8d8b7f" stroke-width="1"/><rect x="4.8" y="5.2" width="13.8" height="27" fill="url(#gGlassD)"/><rect x="4.2" y="36.2" width="13.6" height="25.6" fill="url(#gGlassD)"/><rect x="2.6" y="33" width="17.8" height="1.8" fill="#8d8b7f"/><rect x="2" y="63.7" width="17.8" height="1.6" fill="#8d8b7f"/></g><g transform="matrix(1 -0.0832 0 1 846.6 628.8)"><rect x="0" y="0" width="25.8" height="67.5" fill="#68665d" stroke="#0a0a0a" stroke-width="1"/><rect x="1.9" y="2" width="22" height="63.1" fill="#0b0b0b"/><rect x="3.6" y="3.9" width="16.4" height="29.5" fill="none" stroke="#8d8b7f" stroke-width="1"/><rect x="3" y="35" width="16.2" height="28" fill="none" stroke="#8d8b7f" stroke-width="1"/><rect x="4.8" y="5.2" width="13.8" height="27" fill="url(#gGlassD)"/><rect x="4.2" y="36.2" width="13.6" height="25.6" fill="url(#gGlassD)"/><rect x="2.6" y="33" width="17.8" height="1.8" fill="#8d8b7f"/><rect x="2" y="63.7" width="17.8" height="1.6" fill="#8d8b7f"/></g><g transform="matrix(1 -0.0832 0 1 941.3 620.9)"><rect x="0" y="0" width="25.8" height="67.5" fill="#68665d" stroke="#0a0a0a" stroke-width="1"/><rect x="1.9" y="2" width="22" height="63.1" fill="#0b0b0b"/><rect x="3.6" y="3.9" width="16.4" height="29.5" fill="none" stroke="#8d8b7f" stroke-width="1"/><rect x="3" y="35" width="16.2" height="28" fill="none" stroke="#8d8b7f" stroke-width="1"/><rect x="4.8" y="5.2" width="13.8" height="27" fill="url(#gGlassM)"/><rect x="4.2" y="36.2" width="13.6" height="25.6" fill="url(#gGlassM)"/><rect x="2.6" y="33" width="17.8" height="1.8" fill="#8d8b7f"/><rect x="2" y="63.7" width="17.8" height="1.6" fill="#8d8b7f"/></g><g transform="matrix(1 -0.0832 0 1 971.3 618.4)"><rect x="0" y="0" width="25.8" height="67.5" fill="#68665d" stroke="#0a0a0a" stroke-width="1"/><rect x="1.9" y="2" width="22" height="63.1" fill="#0b0b0b"/><rect x="3.6" y="3.9" width="16.4" height="29.5" fill="none" stroke="#8d8b7f" stroke-width="1"/><rect x="3" y="35" width="16.2" height="28" fill="none" stroke="#8d8b7f" stroke-width="1"/><rect x="4.8" y="5.2" width="13.8" height="27" fill="url(#gGlassM)"/><rect x="4.2" y="36.2" width="13.6" height="25.6" fill="url(#gGlassM)"/><rect x="2.6" y="33" width="17.8" height="1.8" fill="#8d8b7f"/><rect x="2" y="63.7" width="17.8" height="1.6" fill="#8d8b7f"/></g><g transform="matrix(1 -0.0832 0 1 1049.1 611.9)"><rect x="0" y="0" width="25.8" height="67.5" fill="#68665d" stroke="#0a0a0a" stroke-width="1"/><rect x="1.9" y="2" width="22" height="63.1" fill="#0b0b0b"/><rect x="3.6" y="3.9" width="16.4" height="29.5" fill="none" stroke="#8d8b7f" stroke-width="1"/><rect x="3" y="35" width="16.2" height="28" fill="none" stroke="#8d8b7f" stroke-width="1"/><rect x="4.8" y="5.2" width="13.8" height="27" fill="url(#gGlassD)"/><rect x="4.2" y="36.2" width="13.6" height="25.6" fill="url(#gGlassD)"/><rect x="2.6" y="33" width="17.8" height="1.8" fill="#8d8b7f"/><rect x="2" y="63.7" width="17.8" height="1.6" fill="#8d8b7f"/></g><g transform="matrix(1 -0.0832 0 1 1079.1 609.4)"><rect x="0" y="0" width="25.8" height="67.5" fill="#68665d" stroke="#0a0a0a" stroke-width="1"/><rect x="1.9" y="2" width="22" height="63.1" fill="#0b0b0b"/><rect x="3.6" y="3.9" width="16.4" height="29.5" fill="none" stroke="#8d8b7f" stroke-width="1"/><rect x="3" y="35" width="16.2" height="28" fill="none" stroke="#8d8b7f" stroke-width="1"/><rect x="4.8" y="5.2" width="13.8" height="27" fill="url(#gGlassD)"/><rect x="4.2" y="36.2" width="13.6" height="25.6" fill="url(#gGlassD)"/><rect x="2.6" y="33" width="17.8" height="1.8" fill="#8d8b7f"/><rect x="2" y="63.7" width="17.8" height="1.6" fill="#8d8b7f"/></g><g transform="matrix(1 -0.0832 0 1 1165.5 602.2)"><rect x="0" y="0" width="25.8" height="67.5" fill="#68665d" stroke="#0a0a0a" stroke-width="1"/><rect x="1.9" y="2" width="22" height="63.1" fill="#0b0b0b"/><rect x="3.6" y="3.9" width="16.4" height="29.5" fill="none" stroke="#8d8b7f" stroke-width="1"/><rect x="3" y="35" width="16.2" height="28" fill="none" stroke="#8d8b7f" stroke-width="1"/><rect x="4.8" y="5.2" width="13.8" height="27" fill="url(#gGlassL)"/><rect x="4.2" y="36.2" width="13.6" height="25.6" fill="url(#gGlassL)"/><rect x="2.6" y="33" width="17.8" height="1.8" fill="#8d8b7f"/><rect x="2" y="63.7" width="17.8" height="1.6" fill="#8d8b7f"/></g><g transform="matrix(1 -0.0832 0 1 1195.5 599.7)"><rect x="0" y="0" width="25.8" height="67.5" fill="#68665d" stroke="#0a0a0a" stroke-width="1"/><rect x="1.9" y="2" width="22" height="63.1" fill="#0b0b0b"/><rect x="3.6" y="3.9" width="16.4" height="29.5" fill="none" stroke="#8d8b7f" stroke-width="1"/><rect x="3" y="35" width="16.2" height="28" fill="none" stroke="#8d8b7f" stroke-width="1"/><rect x="4.8" y="5.2" width="13.8" height="27" fill="url(#gGlassM)"/><rect x="4.2" y="36.2" width="13.6" height="25.6" fill="url(#gGlassM)"/><rect x="2.6" y="33" width="17.8" height="1.8" fill="#8d8b7f"/><rect x="2" y="63.7" width="17.8" height="1.6" fill="#8d8b7f"/></g><g transform="matrix(1 -0.0832 0 1 1281.8 592.5)"><rect x="0" y="0" width="25.8" height="67.5" fill="#68665d" stroke="#0a0a0a" stroke-width="1"/><rect x="1.9" y="2" width="22" height="63.1" fill="#0b0b0b"/><rect x="3.6" y="3.9" width="16.4" height="29.5" fill="none" stroke="#8d8b7f" stroke-width="1"/><rect x="3" y="35" width="16.2" height="28" fill="none" stroke="#8d8b7f" stroke-width="1"/><rect x="4.8" y="5.2" width="13.8" height="27" fill="url(#gGlassM)"/><rect x="4.2" y="36.2" width="13.6" height="25.6" fill="url(#gGlassM)"/><rect x="2.6" y="33" width="17.8" height="1.8" fill="#8d8b7f"/><rect x="2" y="63.7" width="17.8" height="1.6" fill="#8d8b7f"/></g><g transform="matrix(1 -0.0832 0 1 1311.8 590.1)"><rect x="0" y="0" width="25.8" height="67.5" fill="#68665d" stroke="#0a0a0a" stroke-width="1"/><rect x="1.9" y="2" width="22" height="63.1" fill="#0b0b0b"/><rect x="3.6" y="3.9" width="16.4" height="29.5" fill="none" stroke="#8d8b7f" stroke-width="1"/><rect x="3" y="35" width="16.2" height="28" fill="none" stroke="#8d8b7f" stroke-width="1"/><rect x="4.8" y="5.2" width="13.8" height="27" fill="url(#gGlassM)"/><rect x="4.2" y="36.2" width="13.6" height="25.6" fill="url(#gGlassM)"/><rect x="2.6" y="33" width="17.8" height="1.8" fill="#8d8b7f"/><rect x="2" y="63.7" width="17.8" height="1.6" fill="#8d8b7f"/></g><g transform="matrix(1 -0.0832 0 1 1398.1 582.9)"><rect x="0" y="0" width="25.8" height="67.5" fill="#68665d" stroke="#0a0a0a" stroke-width="1"/><rect x="1.9" y="2" width="22" height="63.1" fill="#0b0b0b"/><rect x="3.6" y="3.9" width="16.4" height="29.5" fill="none" stroke="#8d8b7f" stroke-width="1"/><rect x="3" y="35" width="16.2" height="28" fill="none" stroke="#8d8b7f" stroke-width="1"/><rect x="4.8" y="5.2" width="13.8" height="27" fill="url(#gGlassL)"/><rect x="4.2" y="36.2" width="13.6" height="25.6" fill="url(#gGlassL)"/><rect x="2.6" y="33" width="17.8" height="1.8" fill="#8d8b7f"/><rect x="2" y="63.7" width="17.8" height="1.6" fill="#8d8b7f"/></g><g transform="matrix(1 -0.0832 0 1 1428.1 580.4)"><rect x="0" y="0" width="25.8" height="67.5" fill="#68665d" stroke="#0a0a0a" stroke-width="1"/><rect x="1.9" y="2" width="22" height="63.1" fill="#0b0b0b"/><rect x="3.6" y="3.9" width="16.4" height="29.5" fill="none" stroke="#8d8b7f" stroke-width="1"/><rect x="3" y="35" width="16.2" height="28" fill="none" stroke="#8d8b7f" stroke-width="1"/><rect x="4.8" y="5.2" width="13.8" height="27" fill="url(#gGlassM)"/><rect x="4.2" y="36.2" width="13.6" height="25.6" fill="url(#gGlassM)"/><rect x="2.6" y="33" width="17.8" height="1.8" fill="#8d8b7f"/><rect x="2" y="63.7" width="17.8" height="1.6" fill="#8d8b7f"/></g><g transform="matrix(1 -0.0832 0 1 1514.4 573.2)"><rect x="0" y="0" width="25.8" height="67.5" fill="#68665d" stroke="#0a0a0a" stroke-width="1"/><rect x="1.9" y="2" width="22" height="63.1" fill="#0b0b0b"/><rect x="3.6" y="3.9" width="16.4" height="29.5" fill="none" stroke="#8d8b7f" stroke-width="1"/><rect x="3" y="35" width="16.2" height="28" fill="none" stroke="#8d8b7f" stroke-width="1"/><rect x="4.8" y="5.2" width="13.8" height="27" fill="url(#gGlassM)"/><rect x="4.2" y="36.2" width="13.6" height="25.6" fill="url(#gGlassM)"/><rect x="2.6" y="33" width="17.8" height="1.8" fill="#8d8b7f"/><rect x="2" y="63.7" width="17.8" height="1.6" fill="#8d8b7f"/></g><g transform="matrix(1 -0.0832 0 1 1544.4 570.7)"><rect x="0" y="0" width="25.8" height="67.5" fill="#68665d" stroke="#0a0a0a" stroke-width="1"/><rect x="1.9" y="2" width="22" height="63.1" fill="#0b0b0b"/><rect x="3.6" y="3.9" width="16.4" height="29.5" fill="none" stroke="#8d8b7f" stroke-width="1"/><rect x="3" y="35" width="16.2" height="28" fill="none" stroke="#8d8b7f" stroke-width="1"/><rect x="4.8" y="5.2" width="13.8" height="27" fill="url(#gGlassM)"/><rect x="4.2" y="36.2" width="13.6" height="25.6" fill="url(#gGlassM)"/><rect x="2.6" y="33" width="17.8" height="1.8" fill="#8d8b7f"/><rect x="2" y="63.7" width="17.8" height="1.6" fill="#8d8b7f"/></g><g transform="matrix(1 -0.0832 0 1 700.3 794.8)"><rect x="0" y="0" width="25.8" height="67.5" fill="#68665d" stroke="#0a0a0a" stroke-width="1"/><rect x="1.9" y="2" width="22" height="63.1" fill="#0b0b0b"/><rect x="3.6" y="3.9" width="16.4" height="29.5" fill="none" stroke="#8d8b7f" stroke-width="1"/><rect x="3" y="35" width="16.2" height="28" fill="none" stroke="#8d8b7f" stroke-width="1"/><rect x="4.8" y="5.2" width="13.8" height="27" fill="url(#gGlassM)"/><rect x="4.2" y="36.2" width="13.6" height="25.6" fill="url(#gGlassM)"/><rect x="2.6" y="33" width="17.8" height="1.8" fill="#8d8b7f"/><rect x="2" y="63.7" width="17.8" height="1.6" fill="#8d8b7f"/></g><g transform="matrix(1 -0.0832 0 1 730.3 792.3)"><rect x="0" y="0" width="25.8" height="67.5" fill="#68665d" stroke="#0a0a0a" stroke-width="1"/><rect x="1.9" y="2" width="22" height="63.1" fill="#0b0b0b"/><rect x="3.6" y="3.9" width="16.4" height="29.5" fill="none" stroke="#8d8b7f" stroke-width="1"/><rect x="3" y="35" width="16.2" height="28" fill="none" stroke="#8d8b7f" stroke-width="1"/><rect x="4.8" y="5.2" width="13.8" height="27" fill="url(#gGlassM)"/><rect x="4.2" y="36.2" width="13.6" height="25.6" fill="url(#gGlassM)"/><rect x="2.6" y="33" width="17.8" height="1.8" fill="#8d8b7f"/><rect x="2" y="63.7" width="17.8" height="1.6" fill="#8d8b7f"/></g><g transform="matrix(1 -0.0832 0 1 816.6 785.2)"><rect x="0" y="0" width="25.8" height="67.5" fill="#68665d" stroke="#0a0a0a" stroke-width="1"/><rect x="1.9" y="2" width="22" height="63.1" fill="#0b0b0b"/><rect x="3.6" y="3.9" width="16.4" height="29.5" fill="none" stroke="#8d8b7f" stroke-width="1"/><rect x="3" y="35" width="16.2" height="28" fill="none" stroke="#8d8b7f" stroke-width="1"/><rect x="4.8" y="5.2" width="13.8" height="27" fill="url(#gGlassD)"/><rect x="4.2" y="36.2" width="13.6" height="25.6" fill="url(#gGlassD)"/><rect x="2.6" y="33" width="17.8" height="1.8" fill="#8d8b7f"/><rect x="2" y="63.7" width="17.8" height="1.6" fill="#8d8b7f"/></g><g transform="matrix(1 -0.0832 0 1 846.6 782.7)"><rect x="0" y="0" width="25.8" height="67.5" fill="#68665d" stroke="#0a0a0a" stroke-width="1"/><rect x="1.9" y="2" width="22" height="63.1" fill="#0b0b0b"/><rect x="3.6" y="3.9" width="16.4" height="29.5" fill="none" stroke="#8d8b7f" stroke-width="1"/><rect x="3" y="35" width="16.2" height="28" fill="none" stroke="#8d8b7f" stroke-width="1"/><rect x="4.8" y="5.2" width="13.8" height="27" fill="url(#gGlassD)"/><rect x="4.2" y="36.2" width="13.6" height="25.6" fill="url(#gGlassD)"/><rect x="2.6" y="33" width="17.8" height="1.8" fill="#8d8b7f"/><rect x="2" y="63.7" width="17.8" height="1.6" fill="#8d8b7f"/></g><g transform="matrix(1 -0.0832 0 1 941.3 774.8)"><rect x="0" y="0" width="25.8" height="67.5" fill="#68665d" stroke="#0a0a0a" stroke-width="1"/><rect x="1.9" y="2" width="22" height="63.1" fill="#0b0b0b"/><rect x="3.6" y="3.9" width="16.4" height="29.5" fill="none" stroke="#8d8b7f" stroke-width="1"/><rect x="3" y="35" width="16.2" height="28" fill="none" stroke="#8d8b7f" stroke-width="1"/><rect x="4.8" y="5.2" width="13.8" height="27" fill="url(#gGlassM)"/><rect x="4.2" y="36.2" width="13.6" height="25.6" fill="url(#gGlassM)"/><rect x="2.6" y="33" width="17.8" height="1.8" fill="#8d8b7f"/><rect x="2" y="63.7" width="17.8" height="1.6" fill="#8d8b7f"/></g><g transform="matrix(1 -0.0832 0 1 971.3 772.3)"><rect x="0" y="0" width="25.8" height="67.5" fill="#68665d" stroke="#0a0a0a" stroke-width="1"/><rect x="1.9" y="2" width="22" height="63.1" fill="#0b0b0b"/><rect x="3.6" y="3.9" width="16.4" height="29.5" fill="none" stroke="#8d8b7f" stroke-width="1"/><rect x="3" y="35" width="16.2" height="28" fill="none" stroke="#8d8b7f" stroke-width="1"/><rect x="4.8" y="5.2" width="13.8" height="27" fill="url(#gGlassM)"/><rect x="4.2" y="36.2" width="13.6" height="25.6" fill="url(#gGlassM)"/><rect x="2.6" y="33" width="17.8" height="1.8" fill="#8d8b7f"/><rect x="2" y="63.7" width="17.8" height="1.6" fill="#8d8b7f"/></g><g transform="matrix(1 -0.0832 0 1 1049.1 765.8)"><rect x="0" y="0" width="25.8" height="67.5" fill="#68665d" stroke="#0a0a0a" stroke-width="1"/><rect x="1.9" y="2" width="22" height="63.1" fill="#0b0b0b"/><rect x="3.6" y="3.9" width="16.4" height="29.5" fill="none" stroke="#8d8b7f" stroke-width="1"/><rect x="3" y="35" width="16.2" height="28" fill="none" stroke="#8d8b7f" stroke-width="1"/><rect x="4.8" y="5.2" width="13.8" height="27" fill="url(#gGlassD)"/><rect x="4.2" y="36.2" width="13.6" height="25.6" fill="url(#gGlassD)"/><rect x="2.6" y="33" width="17.8" height="1.8" fill="#8d8b7f"/><rect x="2" y="63.7" width="17.8" height="1.6" fill="#8d8b7f"/></g><g transform="matrix(1 -0.0832 0 1 1079.1 763.3)"><rect x="0" y="0" width="25.8" height="67.5" fill="#68665d" stroke="#0a0a0a" stroke-width="1"/><rect x="1.9" y="2" width="22" height="63.1" fill="#0b0b0b"/><rect x="3.6" y="3.9" width="16.4" height="29.5" fill="none" stroke="#8d8b7f" stroke-width="1"/><rect x="3" y="35" width="16.2" height="28" fill="none" stroke="#8d8b7f" stroke-width="1"/><rect x="4.8" y="5.2" width="13.8" height="27" fill="url(#gGlassD)"/><rect x="4.2" y="36.2" width="13.6" height="25.6" fill="url(#gGlassD)"/><rect x="2.6" y="33" width="17.8" height="1.8" fill="#8d8b7f"/><rect x="2" y="63.7" width="17.8" height="1.6" fill="#8d8b7f"/></g><g transform="matrix(1 -0.0832 0 1 1281.8 746.4)"><rect x="0" y="0" width="25.8" height="67.5" fill="#68665d" stroke="#0a0a0a" stroke-width="1"/><rect x="1.9" y="2" width="22" height="63.1" fill="#0b0b0b"/><rect x="3.6" y="3.9" width="16.4" height="29.5" fill="none" stroke="#8d8b7f" stroke-width="1"/><rect x="3" y="35" width="16.2" height="28" fill="none" stroke="#8d8b7f" stroke-width="1"/><rect x="4.8" y="5.2" width="13.8" height="27" fill="url(#gGlassM)"/><rect x="4.2" y="36.2" width="13.6" height="25.6" fill="url(#gGlassM)"/><rect x="2.6" y="33" width="17.8" height="1.8" fill="#8d8b7f"/><rect x="2" y="63.7" width="17.8" height="1.6" fill="#8d8b7f"/></g><g transform="matrix(1 -0.0832 0 1 1311.8 744)"><rect x="0" y="0" width="25.8" height="67.5" fill="#68665d" stroke="#0a0a0a" stroke-width="1"/><rect x="1.9" y="2" width="22" height="63.1" fill="#0b0b0b"/><rect x="3.6" y="3.9" width="16.4" height="29.5" fill="none" stroke="#8d8b7f" stroke-width="1"/><rect x="3" y="35" width="16.2" height="28" fill="none" stroke="#8d8b7f" stroke-width="1"/><rect x="4.8" y="5.2" width="13.8" height="27" fill="url(#gGlassM)"/><rect x="4.2" y="36.2" width="13.6" height="25.6" fill="url(#gGlassM)"/><rect x="2.6" y="33" width="17.8" height="1.8" fill="#8d8b7f"/><rect x="2" y="63.7" width="17.8" height="1.6" fill="#8d8b7f"/></g><g transform="matrix(1 -0.0832 0 1 1398.1 736.8)"><rect x="0" y="0" width="25.8" height="67.5" fill="#68665d" stroke="#0a0a0a" stroke-width="1"/><rect x="1.9" y="2" width="22" height="63.1" fill="#0b0b0b"/><rect x="3.6" y="3.9" width="16.4" height="29.5" fill="none" stroke="#8d8b7f" stroke-width="1"/><rect x="3" y="35" width="16.2" height="28" fill="none" stroke="#8d8b7f" stroke-width="1"/><rect x="4.8" y="5.2" width="13.8" height="27" fill="url(#gGlassD)"/><rect x="4.2" y="36.2" width="13.6" height="25.6" fill="url(#gGlassD)"/><rect x="2.6" y="33" width="17.8" height="1.8" fill="#8d8b7f"/><rect x="2" y="63.7" width="17.8" height="1.6" fill="#8d8b7f"/></g><g transform="matrix(1 -0.0832 0 1 1428.1 734.3)"><rect x="0" y="0" width="25.8" height="67.5" fill="#68665d" stroke="#0a0a0a" stroke-width="1"/><rect x="1.9" y="2" width="22" height="63.1" fill="#0b0b0b"/><rect x="3.6" y="3.9" width="16.4" height="29.5" fill="none" stroke="#8d8b7f" stroke-width="1"/><rect x="3" y="35" width="16.2" height="28" fill="none" stroke="#8d8b7f" stroke-width="1"/><rect x="4.8" y="5.2" width="13.8" height="27" fill="url(#gGlassD)"/><rect x="4.2" y="36.2" width="13.6" height="25.6" fill="url(#gGlassD)"/><rect x="2.6" y="33" width="17.8" height="1.8" fill="#8d8b7f"/><rect x="2" y="63.7" width="17.8" height="1.6" fill="#8d8b7f"/></g><g transform="matrix(1 -0.0832 0 1 1514.4 727.1)"><rect x="0" y="0" width="25.8" height="67.5" fill="#68665d" stroke="#0a0a0a" stroke-width="1"/><rect x="1.9" y="2" width="22" height="63.1" fill="#0b0b0b"/><rect x="3.6" y="3.9" width="16.4" height="29.5" fill="none" stroke="#8d8b7f" stroke-width="1"/><rect x="3" y="35" width="16.2" height="28" fill="none" stroke="#8d8b7f" stroke-width="1"/><rect x="4.8" y="5.2" width="13.8" height="27" fill="url(#gGlassM)"/><rect x="4.2" y="36.2" width="13.6" height="25.6" fill="url(#gGlassM)"/><rect x="2.6" y="33" width="17.8" height="1.8" fill="#8d8b7f"/><rect x="2" y="63.7" width="17.8" height="1.6" fill="#8d8b7f"/></g><g transform="matrix(1 -0.0832 0 1 1544.4 724.6)"><rect x="0" y="0" width="25.8" height="67.5" fill="#68665d" stroke="#0a0a0a" stroke-width="1"/><rect x="1.9" y="2" width="22" height="63.1" fill="#0b0b0b"/><rect x="3.6" y="3.9" width="16.4" height="29.5" fill="none" stroke="#8d8b7f" stroke-width="1"/><rect x="3" y="35" width="16.2" height="28" fill="none" stroke="#8d8b7f" stroke-width="1"/><rect x="4.8" y="5.2" width="13.8" height="27" fill="url(#gGlassM)"/><rect x="4.2" y="36.2" width="13.6" height="25.6" fill="url(#gGlassM)"/><rect x="2.6" y="33" width="17.8" height="1.8" fill="#8d8b7f"/><rect x="2" y="63.7" width="17.8" height="1.6" fill="#8d8b7f"/></g><polygon points="1169.4,776.7 1221.9,772.5 1221.9,849.6 1169.4,853.8" fill="#75736b" stroke="#0a0a0a" stroke-width="1" stroke-linejoin="round"/><polygon points="1172.4,779.5 1218.9,775.7 1218.9,849.9 1172.4,853.6" fill="url(#gDoor)" stroke="#0a0a0a" stroke-width="1" stroke-linejoin="round"/><line x1="1195.3" y1="777.6" x2="1195.3" y2="851.7" stroke="#0a0a0a" stroke-width="1"/><line x1="1218.3" y1="775.7" x2="1218.3" y2="849.9" stroke="#0a0a0a" stroke-width="2"/><path d="M1189 815.5L1194 815M1197 814.7L1203 814.2M1191 819L1194 818.8M1197 818.5L1199 818.3" stroke="#0a0a0a" stroke-width="1.6" fill="none"/><polygon points="412.4,463.6 426.5,468.4 426.5,822 412.4,817.2" fill="#c4c7c6"/><polygon points="426.5,468.4 433.5,467.8 433.5,819.9 426.5,822" fill="#f4f1de"/><line x1="412.4" y1="463.6" x2="412.4" y2="817.2" stroke="#111" stroke-width="1"/><line x1="426.5" y1="468.4" x2="426.5" y2="822" stroke="#111" stroke-width="1"/><line x1="433.5" y1="467.8" x2="433.5" y2="819.9" stroke="#111" stroke-width="1"/><polygon points="412.4,463.6 418.4,462 433.5,467.5 426.5,468.4" fill="#fbfaf0" stroke="#111" stroke-width="1" stroke-linejoin="round"/><polygon points="512.3,497.6 525.5,502.1 525.5,855.7 512.3,851.2" fill="#c4c7c6"/><polygon points="525.5,502.1 532.3,501.5 532.3,853.6 525.5,855.7" fill="#f4f1de"/><line x1="512.3" y1="497.6" x2="512.3" y2="851.2" stroke="#111" stroke-width="1"/><line x1="525.5" y1="502.1" x2="525.5" y2="855.7" stroke="#111" stroke-width="1"/><line x1="532.3" y1="501.5" x2="532.3" y2="853.6" stroke="#111" stroke-width="1"/><polygon points="512.3,497.6 518.3,496 532.3,501.2 525.5,502.1" fill="#fbfaf0" stroke="#111" stroke-width="1" stroke-linejoin="round"/><polygon points="553.6,511.6 567.6,516.4 567.6,870 553.6,865.2" fill="#c4c7c6"/><polygon points="567.6,516.4 573.4,515.9 573.4,868 567.6,870" fill="#f4f1de"/><line x1="553.6" y1="511.6" x2="553.6" y2="865.2" stroke="#111" stroke-width="1"/><line x1="567.6" y1="516.4" x2="567.6" y2="870" stroke="#111" stroke-width="1"/><line x1="573.4" y1="515.9" x2="573.4" y2="868" stroke="#111" stroke-width="1"/><polygon points="553.6,511.6 559.6,510 573.4,515.6 567.6,516.4" fill="#fbfaf0" stroke="#111" stroke-width="1" stroke-linejoin="round"/><polygon points="644.8,543.4 658.6,548.1 658.6,902.6 644.8,897.6" fill="#c4c7c6"/><polygon points="658.6,548.1 686.3,545.8 686.3,900.6 658.6,902.6" fill="#ffffff"/><line x1="644.8" y1="543.4" x2="644.8" y2="897.6" stroke="#111" stroke-width="1"/><line x1="658.6" y1="548.1" x2="658.6" y2="902.6" stroke="#111" stroke-width="1"/><line x1="686.3" y1="545.8" x2="686.3" y2="900.6" stroke="#111" stroke-width="1"/><polygon points="644.8,543.4 671.8,541 686.3,545.5 658.6,548.1" fill="#fdfdf6" stroke="#111" stroke-width="1" stroke-linejoin="round"/><polygon points="773.1,537.1 776.9,537.7 776.9,892.3 773.1,890" fill="url(#gColS)"/><polygon points="776.9,537.7 803.9,535.4 803.9,890 776.9,892.3" fill="#ffffff"/><line x1="773.1" y1="537.1" x2="773.1" y2="890" stroke="#111" stroke-width="1"/><line x1="776.9" y1="537.7" x2="776.9" y2="892.3" stroke="#111" stroke-width="1"/><line x1="803.9" y1="535.4" x2="803.9" y2="890" stroke="#111" stroke-width="1"/><polygon points="773.1,537.1 799.1,534.5 803.9,535.1 776.9,537.7" fill="#fdfdf2" stroke="#111" stroke-width="1" stroke-linejoin="round"/><polygon points="889.2,527.4 893,528 893,882.6 889.2,880.3" fill="url(#gColS)"/><polygon points="893,528 920,525.8 920,880.4 893,882.6" fill="#ffffff"/><line x1="889.2" y1="527.4" x2="889.2" y2="880.3" stroke="#111" stroke-width="1"/><line x1="893" y1="528" x2="893" y2="882.6" stroke="#111" stroke-width="1"/><line x1="920" y1="525.8" x2="920" y2="880.4" stroke="#111" stroke-width="1"/><polygon points="889.2,527.4 915.2,524.8 920,525.5 893,528" fill="#fdfdf2" stroke="#111" stroke-width="1" stroke-linejoin="round"/><polygon points="1005.2,517.8 1009,518.4 1009,873 1005.2,870.7" fill="url(#gColS)"/><polygon points="1009,518.4 1036,516.1 1036,870.7 1009,873" fill="#ffffff"/><line x1="1005.2" y1="517.8" x2="1005.2" y2="870.7" stroke="#111" stroke-width="1"/><line x1="1009" y1="518.4" x2="1009" y2="873" stroke="#111" stroke-width="1"/><line x1="1036" y1="516.1" x2="1036" y2="870.7" stroke="#111" stroke-width="1"/><polygon points="1005.2,517.8 1031.2,515.2 1036,515.8 1009,518.4" fill="#fdfdf2" stroke="#111" stroke-width="1" stroke-linejoin="round"/><polygon points="1121.2,508.1 1125,508.7 1125,863.3 1121.2,861" fill="url(#gColS)"/><polygon points="1125,508.7 1152,506.5 1152,861.1 1125,863.3" fill="#ffffff"/><line x1="1121.2" y1="508.1" x2="1121.2" y2="861" stroke="#111" stroke-width="1"/><line x1="1125" y1="508.7" x2="1125" y2="863.3" stroke="#111" stroke-width="1"/><line x1="1152" y1="506.5" x2="1152" y2="861.1" stroke="#111" stroke-width="1"/><polygon points="1121.2,508.1 1147.2,505.5 1152,506.2 1125,508.7" fill="#fdfdf2" stroke="#111" stroke-width="1" stroke-linejoin="round"/><polygon points="1237.3,498.5 1241.1,499.1 1241.1,853.7 1237.3,851.4" fill="url(#gColS)"/><polygon points="1241.1,499.1 1268.1,496.8 1268.1,851.4 1241.1,853.7" fill="#ffffff"/><line x1="1237.3" y1="498.5" x2="1237.3" y2="851.4" stroke="#111" stroke-width="1"/><line x1="1241.1" y1="499.1" x2="1241.1" y2="853.7" stroke="#111" stroke-width="1"/><line x1="1268.1" y1="496.8" x2="1268.1" y2="851.4" stroke="#111" stroke-width="1"/><polygon points="1237.3,498.5 1263.3,495.9 1268.1,496.5 1241.1,499.1" fill="#fdfdf2" stroke="#111" stroke-width="1" stroke-linejoin="round"/><polygon points="1353.3,488.8 1357.1,489.4 1357.1,844 1353.3,841.7" fill="url(#gColS)"/><polygon points="1357.1,489.4 1384.1,487.2 1384.1,841.8 1357.1,844" fill="#ffffff"/><line x1="1353.3" y1="488.8" x2="1353.3" y2="841.7" stroke="#111" stroke-width="1"/><line x1="1357.1" y1="489.4" x2="1357.1" y2="844" stroke="#111" stroke-width="1"/><line x1="1384.1" y1="487.2" x2="1384.1" y2="841.8" stroke="#111" stroke-width="1"/><polygon points="1353.3,488.8 1379.3,486.2 1384.1,486.9 1357.1,489.4" fill="#fdfdf2" stroke="#111" stroke-width="1" stroke-linejoin="round"/><polygon points="1469.4,479.1 1473.2,479.7 1473.2,834.3 1469.4,832" fill="url(#gColS)"/><polygon points="1473.2,479.7 1500.2,477.5 1500.2,832.1 1473.2,834.3" fill="#ffffff"/><line x1="1469.4" y1="479.1" x2="1469.4" y2="832" stroke="#111" stroke-width="1"/><line x1="1473.2" y1="479.7" x2="1473.2" y2="834.3" stroke="#111" stroke-width="1"/><line x1="1500.2" y1="477.5" x2="1500.2" y2="832.1" stroke="#111" stroke-width="1"/><polygon points="1469.4,479.1 1495.4,476.5 1500.2,477.2 1473.2,479.7" fill="#fdfdf2" stroke="#111" stroke-width="1" stroke-linejoin="round"/><polygon points="1585.5,469.5 1589.2,470.1 1589.2,824.7 1585.5,822.4" fill="url(#gColS)"/><polygon points="1589.2,470.1 1618.5,467.7 1618.5,822.3 1589.2,824.7" fill="#ffffff"/><line x1="1585.5" y1="469.5" x2="1585.5" y2="822.4" stroke="#111" stroke-width="1"/><line x1="1589.2" y1="470.1" x2="1589.2" y2="824.7" stroke="#111" stroke-width="1"/><line x1="1618.5" y1="467.7" x2="1618.5" y2="822.3" stroke="#111" stroke-width="1"/><polygon points="1585.5,469.5 1611.5,466.9 1618.5,467.4 1589.2,470.1" fill="#fdfdf2" stroke="#111" stroke-width="1" stroke-linejoin="round"/><polygon points="1126.7,871.3 1149.7,882 1305.3,867.8 1274,855" fill="#c0c3bf" stroke="#111" stroke-width="1" stroke-linejoin="round"/><polygon points="1126.7,871.3 1149.7,882 1149.7,887.6 1126.7,876.5" fill="#aaada9" stroke="#111" stroke-width="1" stroke-linejoin="round"/><polygon points="1149.7,882 1305.3,867.8 1305.3,874.5 1149.7,887.6" fill="#c7cac6" stroke="#111" stroke-width="1" stroke-linejoin="round"/><polygon points="1128.9,864.9 1154.6,874.2 1290.2,863.4 1262,851" fill="#c0c3bf" stroke="#111" stroke-width="1" stroke-linejoin="round"/><polygon points="1128.9,864.9 1154.6,874.2 1154.6,879 1128.9,869.5" fill="#aaada9" stroke="#111" stroke-width="1" stroke-linejoin="round"/><polygon points="1154.6,874.2 1290.2,863.4 1290.2,868 1154.6,879" fill="#9b9e9a" stroke="#111" stroke-width="1" stroke-linejoin="round"/><polygon points="1138.5,859 1159.3,866 1274.9,856.7 1254.2,848.1 1222,850 1169,854.5" fill="#bcbfbb" stroke="#111" stroke-width="1" stroke-linejoin="round"/><polygon points="1138.5,859 1159.3,866 1159.3,870.8 1138.5,864" fill="#aaada9" stroke="#111" stroke-width="1" stroke-linejoin="round"/><polygon points="1159.3,866 1274.9,856.7 1274.9,860.9 1159.3,870.8" fill="#9b9e9a" stroke="#111" stroke-width="1" stroke-linejoin="round"/><polygon points="1271.5,847 1305,866.5 1305,868 1271.5,853" fill="#8f928e" stroke="#111" stroke-width="1" stroke-linejoin="round"/><polygon points="409.3,851.5 462,869.8 507.8,864 455,846" fill="url(#gStep)" stroke="#111" stroke-width="1" stroke-linejoin="round"/><polygon points="409.3,851.5 462,869.8 462,875.3 409.3,857.3" fill="#9a9d99" stroke="#111" stroke-width="1" stroke-linejoin="round"/><polygon points="462,869.8 507.8,864 493.2,872.4 462,875.3" fill="#c9ccc8" stroke="#111" stroke-width="1" stroke-linejoin="round"/><polygon points="424.3,847.1 467.2,861.8 521,857.4 478,843" fill="url(#gStep)" stroke="#111" stroke-width="1" stroke-linejoin="round"/><polygon points="424.3,847.1 467.2,861.8 467.2,867 424.3,852.6" fill="#8e918d" stroke="#111" stroke-width="1" stroke-linejoin="round"/><polygon points="467.2,861.8 521,857.4 509.3,864 467.2,867" fill="#c9ccc8" stroke="#111" stroke-width="1" stroke-linejoin="round"/><polygon points="439.3,842.3 468.3,839.8 492.4,839.2 497.6,841.2 512.2,845.6 512.2,850 517,850 471.9,852.6" fill="#b7bab6" stroke="#111" stroke-width="1" stroke-linejoin="round"/><polygon points="439.3,842.3 471.9,852.6 471.9,858.1 439.3,848.2" fill="#5f6260" stroke="#111" stroke-width="1" stroke-linejoin="round"/><polygon points="471.9,852.6 517,850 517,855.5 471.9,858.1" fill="#c9ccc8" stroke="#111" stroke-width="1" stroke-linejoin="round"/><line x1="479.2" y1="834.6" x2="468.3" y2="839.8" stroke="#111" stroke-width="1"/><line x1="493.2" y1="872.4" x2="525" y2="855.4" stroke="#111" stroke-width="1"/><polygon points="397.5,353.5 422,351 662,436.5 653,441" fill="#737672" stroke="#222" stroke-width="1" stroke-linejoin="round"/><polygon points="397.5,353.5 653,441 653,447.2 397.5,359.6" fill="#4f5351" stroke="#111" stroke-width="1" stroke-linejoin="round"/><polygon points="653,441 662,436.5 1608,357.6 1633,358.2" fill="#6d706c" stroke="#222" stroke-width="1" stroke-linejoin="round"/><line x1="666" y1="437.6" x2="1606" y2="359.2" stroke="#e8e2b8" stroke-width="1" stroke-dasharray="3.5 8.5"/><polygon points="653,441.6 1633,358.8 1633,364 1608.5,366.4 653,447.2" fill="#7c7e78" stroke="#111" stroke-width="1" stroke-linejoin="round"/><polygon points="1608,355.2 1633,358.2 1633,359 1608,359.6" fill="#6c6e68" stroke="#111" stroke-width="1" stroke-linejoin="round"/><polygon points="422,351 784,251 662,434" fill="url(#tileS)"/><polygon points="422,351 784,251 662,434" fill="#000" filter="url(#mottS)"/><polygon points="422,351 784,251 662,434" fill="none" stroke="#111" stroke-width="1" stroke-linejoin="round"/><polygon points="784,251 1247,211 1608,355.2 662,434" fill="url(#tileF)"/><polygon points="784,251 1247,211 1608,355.2 662,434" fill="#000" filter="url(#mottF)"/><polygon points="784,251 1247,211 1608,355.2 662,434" fill="none" stroke="#111" stroke-width="1" stroke-linejoin="round"/><polygon points="422,350.6 662,433.4 662,437 422,354.2" fill="#84403a" stroke="#2a1210" stroke-width="1" stroke-linejoin="round"/><polygon points="662,433.4 1608,354.6 1608,358 662,437" fill="#cf5548" stroke="#3a1714" stroke-width="1" stroke-linejoin="round"/><line x1="662" y1="435.3" x2="1608" y2="356.4" stroke="#a83a30" stroke-width="1"/><line x1="1247" y1="211" x2="1608" y2="355.2" stroke="#111" stroke-width="1.6"/></svg><svg class="abs" style="left:1735px;top:230px" width="145" height="85" viewBox="0 0 145 85"><defs><linearGradient id="vcf" x1="0" y1="0" x2="0" y2="1"><stop offset="0" stop-color="#ededed"/><stop offset="1" stop-color="#d6d6d6"/></linearGradient></defs><g transform="rotate(-3 71 62)"><ellipse cx="71" cy="62" rx="68" ry="17" fill="#f2f2f2" stroke="#cfcfcf" stroke-width="1" stroke-dasharray="2 1.5"/><ellipse cx="71" cy="61" rx="51" ry="11" fill="#ffffff" stroke="#e2e2e2"/></g><ellipse cx="76" cy="64" rx="30" ry="6" fill="#e6e6e6"/><path d="M40 9L50 7L104 10L104 13L61 13Z" fill="#f3f3f3" stroke="#bdbdbd" stroke-width=".8"/><path d="M40 9L61 13L61 64L41 54Z" fill="#e3e3e3" stroke="#bdbdbd" stroke-width=".8"/><path d="M61 13L104 10L104 58L61 64Z" fill="url(#vcf)" stroke="#bdbdbd" stroke-width=".8"/><path d="M61 18L66 18L66 40L61 40Z" fill="#ececec"/></svg><div class="abs" style="left:1805px;top:250px;font-size:24px;line-height:28px;color:#9a9a9a;transform:skewY(-4deg)">后</div><div class="abs" style="left:1780px;top:255px;font-size:15px;line-height:24px;color:#a8a8a8;transform:skewY(24deg) scaleX(.7)">右</div><svg class="abs" style="left:1860px;top:343px" width="38" height="120" viewBox="0 0 38 120"><rect x="1.5" y="1.5" width="33" height="116" rx="4" fill="#f1f1f1" stroke="#a9a9a9" stroke-width="1.5"/><circle cx="28" cy="8" r="3.5" fill="#b9b9b9"/><path d="M26.5 6.5L29.5 9.5M29.5 6.5L26.5 9.5" stroke="#fff" stroke-width=".9"/><path d="M8 32C8 26 12 22 18 22L29 22L29 33C29 39 25 43 19 43C12 43 8 39 8 32Z" fill="#f6f6f6" stroke="#8f8f8f" stroke-width="1.1"/><circle cx="18.5" cy="32.5" r="6.5" fill="#fafafa" stroke="#8f8f8f" stroke-width="1.1"/><path d="M13 36L10 40M24 36L27 40" stroke="#8f8f8f"/><path d="M15 51L21 51L18 54.5Z" fill="#666"/><path d="M5 58.5L32 58.5" stroke="#bdbdbd"/><rect x="10.5" y="67.5" width="10" height="10" fill="#9bc47a" stroke="#5b8f3a"/><path d="M11 71L20 71M11 74L20 74M14 68L14 77M17 68L17 77" stroke="#d7e9c8" stroke-width=".7"/><circle cx="22" cy="78" r="3.5" fill="#f4f4f4" stroke="#777" stroke-width="1.1"/><path d="M24.5 80.5L28 84" stroke="#777" stroke-width="1.6"/><path d="M15 93L21 93L18 96.5Z" fill="#666"/><circle cx="28" cy="111" r="3.5" fill="#9a9a9a"/><path d="M26 110L30 110M26 112L30 112" stroke="#fff" stroke-width=".8"/></svg><div class="abs" style="left:1905px;top:562px;width:2px;height:16px;background:#777"></div><div class="abs" style="left:237px;top:967px;line-height:16px;font-size:11px;letter-spacing:0px;color:#111;word-spacing:4.5px">1 : 100</div><svg class="abs" style="left:296px;top:968px" width="16" height="13" viewBox="0 0 16 13"><rect x="1" y="1" width="14" height="11" fill="#f4f4f4" stroke="#333" stroke-width="1.2"/><rect x="2" y="2" width="2" height="2" fill="#8a8a8a"/><rect x="6" y="2" width="2" height="2" fill="#8a8a8a"/><rect x="10" y="2" width="2" height="2" fill="#8a8a8a"/><rect x="4" y="4" width="2" height="2" fill="#8a8a8a"/><rect x="8" y="4" width="2" height="2" fill="#8a8a8a"/><rect x="12" y="4" width="2" height="2" fill="#8a8a8a"/><rect x="2" y="6" width="2" height="2" fill="#8a8a8a"/><rect x="6" y="6" width="2" height="2" fill="#8a8a8a"/><rect x="10" y="6" width="2" height="2" fill="#8a8a8a"/><rect x="4" y="8" width="2" height="2" fill="#8a8a8a"/><rect x="8" y="8" width="2" height="2" fill="#8a8a8a"/><rect x="12" y="8" width="2" height="2" fill="#8a8a8a"/><rect x="2" y="10" width="2" height="2" fill="#8a8a8a"/><rect x="6" y="10" width="2" height="2" fill="#8a8a8a"/><rect x="10" y="10" width="2" height="2" fill="#8a8a8a"/></svg><svg class="abs" style="left:317px;top:968px" width="16" height="13" viewBox="0 0 16 13"><path d="M1 5L4 1.5L15 1.5L12 5Z" fill="#cfe6fa" stroke="#1c6fd0"/><path d="M1 5L12 5L12 12L1 12Z" fill="#fff" stroke="#1c6fd0"/><path d="M12 5L15 1.5L15 8.5L12 12Z" fill="#9cc9f0" stroke="#1c6fd0"/><path d="M3 8.5L10 8.5" stroke="#1c6fd0"/></svg><svg class="abs" style="left:338px;top:967px" width="18" height="15" viewBox="0 0 18 15"><circle cx="7" cy="7" r="3.5" fill="#ffd24a" stroke="#c8850a"/><path d="M7 0.5L7 2.5M7 11.5L7 13.5M0.5 7L2.5 7M11.5 7L13.5 7M2.5 2.5L4 4M10 10L11.5 11.5M2.5 11.5L4 10M10 4L11.5 2.5" stroke="#c8850a" stroke-width="1.1"/><path d="M11 9L16 14M16 9L11 14" stroke="#d8201a" stroke-width="2"/></svg><svg class="abs" style="left:359px;top:967px" width="18" height="15" viewBox="0 0 18 15"><circle cx="6" cy="6" r="4" fill="#fff" stroke="#1c6fd0" stroke-width="1.3"/><path d="M3 12L9 12" stroke="#1c6fd0" stroke-width="1.3"/><path d="M9 8L15 14M15 8L9 14" stroke="#d8201a" stroke-width="2"/></svg><svg class="abs" style="left:379px;top:967px" width="19" height="15" viewBox="0 0 19 15"><path d="M1 4L4 6L5 4L11 4L12 6L10 11L4 11L3 7" fill="#eee" stroke="#555" stroke-width="1"/><path d="M7 2L9 2" stroke="#555"/><circle cx="14" cy="8.5" r="2.8" fill="#dcecfb" stroke="#1c6fd0" stroke-width="1.1"/><path d="M13 11.5L15 11.5L15 13.5L13 13.5Z" fill="#1c6fd0"/></svg><svg class="abs" style="left:400px;top:967px" width="19" height="15" viewBox="0 0 19 15"><path d="M1 8L5 8M3 6L5 8L3 10" stroke="#1c6fd0" fill="none"/><rect x="5.5" y="2.5" width="9" height="8" fill="#cfe6fa" stroke="#1c6fd0"/><path d="M6 6L14 6M9 3L9 14" stroke="#1c6fd0"/><path d="M10 7L16 13M16 7L10 13" stroke="#d8201a" stroke-width="2"/></svg><svg class="abs" style="left:421px;top:967px" width="19" height="15" viewBox="0 0 19 15"><path d="M1 8L5 8M3 6L5 8L3 10" stroke="#1c6fd0" fill="none"/><rect x="5.5" y="2.5" width="9" height="8" fill="#cfe6fa" stroke="#1c6fd0"/><path d="M6 6L14 6M9 3L9 14" stroke="#1c6fd0"/><circle cx="14" cy="8" r="2.5" fill="#cfe6fa" stroke="#1c6fd0"/><path d="M14 10.5L14 14" stroke="#1c6fd0"/></svg><svg class="abs" style="left:442px;top:966px" width="19" height="17" viewBox="0 0 19 17"><path d="M1 7L7 1.5L15 5L15 12L7 15L2.5 13L2.5 7.5Z" fill="#f2f3f4" stroke="#333" stroke-width="1.1"/><path d="M7 8L7 15M2.5 7.5L7 8L15 5" stroke="#333" fill="none"/><rect x="9.5" y="9.5" width="7" height="6" rx="1" fill="#fff" stroke="#333"/><path d="M11 9.5L11 8A2 2 0 0 1 15 8L15 9.5" fill="none" stroke="#333"/></svg><svg class="abs" style="left:463px;top:967px" width="19" height="15" viewBox="0 0 19 15"><path d="M1 5L4 3L6 7C6 10 9 11 10 8L12 5L15 3" fill="none" stroke="#1c5fa8" stroke-width="1.2"/><path d="M6 7C7 11 10 11 10.5 8C12 12 16 11 16 7L12 5Z" fill="#dcecfb" stroke="#1c5fa8" stroke-width="1.1"/></svg><svg class="abs" style="left:487px;top:968px" width="10" height="14" viewBox="0 0 10 14"><circle cx="5" cy="5.5" r="2.8" fill="#e3f1fd" stroke="#3c8be0" stroke-width="1.2"/><path d="M4 8.5L6 8.5L6 11L4 11Z" fill="#3c8be0"/></svg><svg class="abs" style="left:504px;top:967px" width="19" height="15" viewBox="0 0 19 15"><rect x="1.5" y="3.5" width="13" height="9" fill="#f4f4f4" stroke="#222" stroke-dasharray="3 1.5"/><rect x="8.5" y="7.5" width="8" height="6" fill="#fff" stroke="#222"/><circle cx="12.5" cy="10.5" r="1.5" fill="#555"/></svg><svg class="abs" style="left:525px;top:967px" width="19" height="15" viewBox="0 0 19 15"><path d="M1 13L1 6L6 2L13 2L13 13Z" fill="#e8d2c0" stroke="#7a3b2a"/><path d="M3 13L3 7M5.5 13L5.5 5M8 13L8 4M10.5 13L10.5 4" stroke="#7a3b2a"/><circle cx="14.5" cy="9" r="3" fill="#ffd24a" stroke="#c8850a"/></svg><svg class="abs" style="left:546px;top:967px" width="19" height="15" viewBox="0 0 19 15"><path d="M2 6L6 2L16 2L16 9L12 13L2 13Z" fill="#eee" stroke="#444"/><path d="M2 6L12 6L12 13M12 6L16 2" stroke="#444" fill="none"/><rect x="4.5" y="7.5" width="5" height="4" fill="#fff" stroke="#444"/></svg><svg class="abs" style="left:567px;top:967px" width="19" height="15" viewBox="0 0 19 15"><path d="M2 1L2 13M2 3L15 3M2 11L15 11" stroke="#222" stroke-width="1.1" stroke-dasharray="4 1.5" fill="none"/><rect x="10.5" y="5.5" width="6" height="5" fill="#ddd" stroke="#222"/></svg><div class="abs" style="left:1235px;top:975px;width:16px;height:2px;background:#777"></div><svg class="abs" style="left:1899px;top:974px" width="11" height="11" viewBox="0 0 11 11"><path d="M9 2L10 2M6 5L7 5M9 5L10 5M3 8L4 8M6 8L7 8M9 8L10 8" stroke="#9a9a9a" stroke-width="1.5"/></svg><div class="abs" style="left:-4px;top:990px;line-height:17px;font-size:12px;color:#111;white-space:nowrap;letter-spacing:0.17px">单击可进行选择; 按 Tab 键并单击可选择其他项目; 按 Ctrl 键并单击可将新项目添加到选择集; 按 Shift 键并单击可取消选择。</div><svg class="abs" style="left:936px;top:989px" width="20" height="19" viewBox="0 0 20 19"><path d="M2 9L6 6L10 9L10 16L6 18L2 16Z" fill="#9cc9f0" stroke="#1c5fa8"/><path d="M7 4L10 2L13 4L13 9L10 11L7 9Z" fill="#7fbf5a" stroke="#3d7a22"/><path d="M12 8L15 8L15 18L12 18Z" fill="#fff" stroke="#1c5fa8"/><circle cx="15" cy="7" r="2" fill="#fff" stroke="#1c5fa8"/></svg><div class="abs" style="left:962px;top:989px;width:205px;height:19px;background:#fff;border:1px solid #dcdcdc"></div><svg class="abs" style="left:1152px;top:995px" width="11" height="7" viewBox="0 0 11 7"><path d="M1 1L5.5 5.5L10 1" fill="none" stroke="#8a8a8a" stroke-width="1"/></svg><svg class="abs" style="left:1174px;top:989px" width="18" height="18" viewBox="0 0 18 18"><path d="M4 2L13 2L13 6L8 6L8 9L4 9Z" fill="#bbb" stroke="#8a8a8a"/><path d="M6 9L3 17" stroke="#8a8a8a" stroke-width="2"/></svg><div class="abs" style="left:1195px;top:990px;line-height:17px;font-size:12px;color:#222">:0</div><svg class="abs" style="left:1227px;top:990px" width="18" height="17" viewBox="0 0 18 17"><rect x="1.5" y="1.5" width="15" height="14" fill="#fff" stroke="#333" stroke-width="1.2"/><path d="M2 4.5L16 4.5" stroke="#333" stroke-width="1.5"/><path d="M4 8L6 8M8 8L14 8M4 11L6 11M8 11L14 11" stroke="#333"/></svg><svg class="abs" style="left:1253px;top:989px" width="18" height="18" viewBox="0 0 18 18"><rect x="1" y="1" width="15" height="15" fill="#a9a9a9"/><path d="M4 9L11 9M8 6L11 9L8 12" stroke="#e8e8e8" stroke-width="1.5" fill="none"/><path d="M13 3L13 15" stroke="#ddd" stroke-width="1.5"/></svg><div class="abs" style="left:1277px;top:989px;width:205px;height:19px;background:#fff;border:1px solid #dcdcdc"></div><div class="abs" style="left:1281px;top:990px;line-height:17px;font-size:12px;color:#7a7a7a">主模型</div><svg class="abs" style="left:1468px;top:995px" width="11" height="7" viewBox="0 0 11 7"><path d="M1 1L5.5 5.5L10 1" fill="none" stroke="#8a8a8a" stroke-width="1"/></svg><svg class="abs" style="left:1661px;top:989px" width="20" height="19" viewBox="0 0 20 19"><path d="M2 5C2 2 6 2 7 5C8 2 12 2 12 5C14 3 16 5 14 7L3 7C1 7 1 5 2 5Z" fill="#f3b24a" stroke="#8a5a10"/><path d="M8 6L8 15L10.5 13L12 16.5L13.5 16L12 12.5L15 12Z" fill="#fff" stroke="#111" stroke-width=".9"/></svg><svg class="abs" style="left:1687px;top:989px" width="20" height="19" viewBox="0 0 20 19"><path d="M1 12L8 4L10 6L5 12L12 12" fill="none" stroke="#1c6fd0" stroke-width="1.3"/><path d="M11 1L17 7M17 1L11 7" stroke="#d21" stroke-width="1.6"/><path d="M10 6L10 15L12.5 13L14 16.5L15.5 16L14 12.5L17 12Z" fill="#fff" stroke="#111" stroke-width=".9"/></svg><svg class="abs" style="left:1713px;top:989px" width="20" height="19" viewBox="0 0 20 19"><rect x="1.5" y="2.5" width="11" height="5" fill="#f3b24a" stroke="#a0521a"/><path d="M7 8L7 16M3 11L11 11" stroke="#a0521a" stroke-width="1.3"/><path d="M10 6L10 15L12.5 13L14 16.5L15.5 16L14 12.5L17 12Z" fill="#fff" stroke="#111" stroke-width=".9"/></svg><svg class="abs" style="left:1739px;top:989px" width="20" height="19" viewBox="0 0 20 19"><path d="M2 3L9 3L9 15L2 15" fill="#e3f1fd" stroke="#1c6fd0" stroke-width="1.3"/><path d="M11 1L17 7M17 1L11 7" stroke="#d21" stroke-width="1.6"/><path d="M10 6L10 15L12.5 13L14 16.5L15.5 16L14 12.5L17 12Z" fill="#fff" stroke="#111" stroke-width=".9"/></svg><svg class="abs" style="left:1765px;top:989px" width="20" height="19" viewBox="0 0 20 19"><path d="M6 1L6 11M1 6L11 6M6 1L4.5 3M6 1L7.5 3M1 6L3 4.5M1 6L3 7.5M11 6L9 4.5M11 6L9 7.5" stroke="#111" fill="none"/><path d="M10 6L10 15L12.5 13L14 16.5L15.5 16L14 12.5L17 12Z" fill="#fff" stroke="#111" stroke-width=".9"/></svg><svg class="abs" style="left:1791px;top:990px" width="17" height="17" viewBox="0 0 17 17"><circle cx="8.5" cy="8.5" r="5.5" fill="none" stroke="#b2b2b2" stroke-width="2.5" stroke-dasharray="3 1.5"/></svg><svg class="abs" style="left:1815px;top:990px" width="17" height="17" viewBox="0 0 17 17"><path d="M1.5 2L15.5 2L10 9L10 15L7 13L7 9Z" fill="#f0f0f0" stroke="#333" stroke-width="1.2"/></svg><div class="abs" style="left:1832px;top:990px;line-height:17px;font-size:12px;color:#222">:0</div></body></html>
